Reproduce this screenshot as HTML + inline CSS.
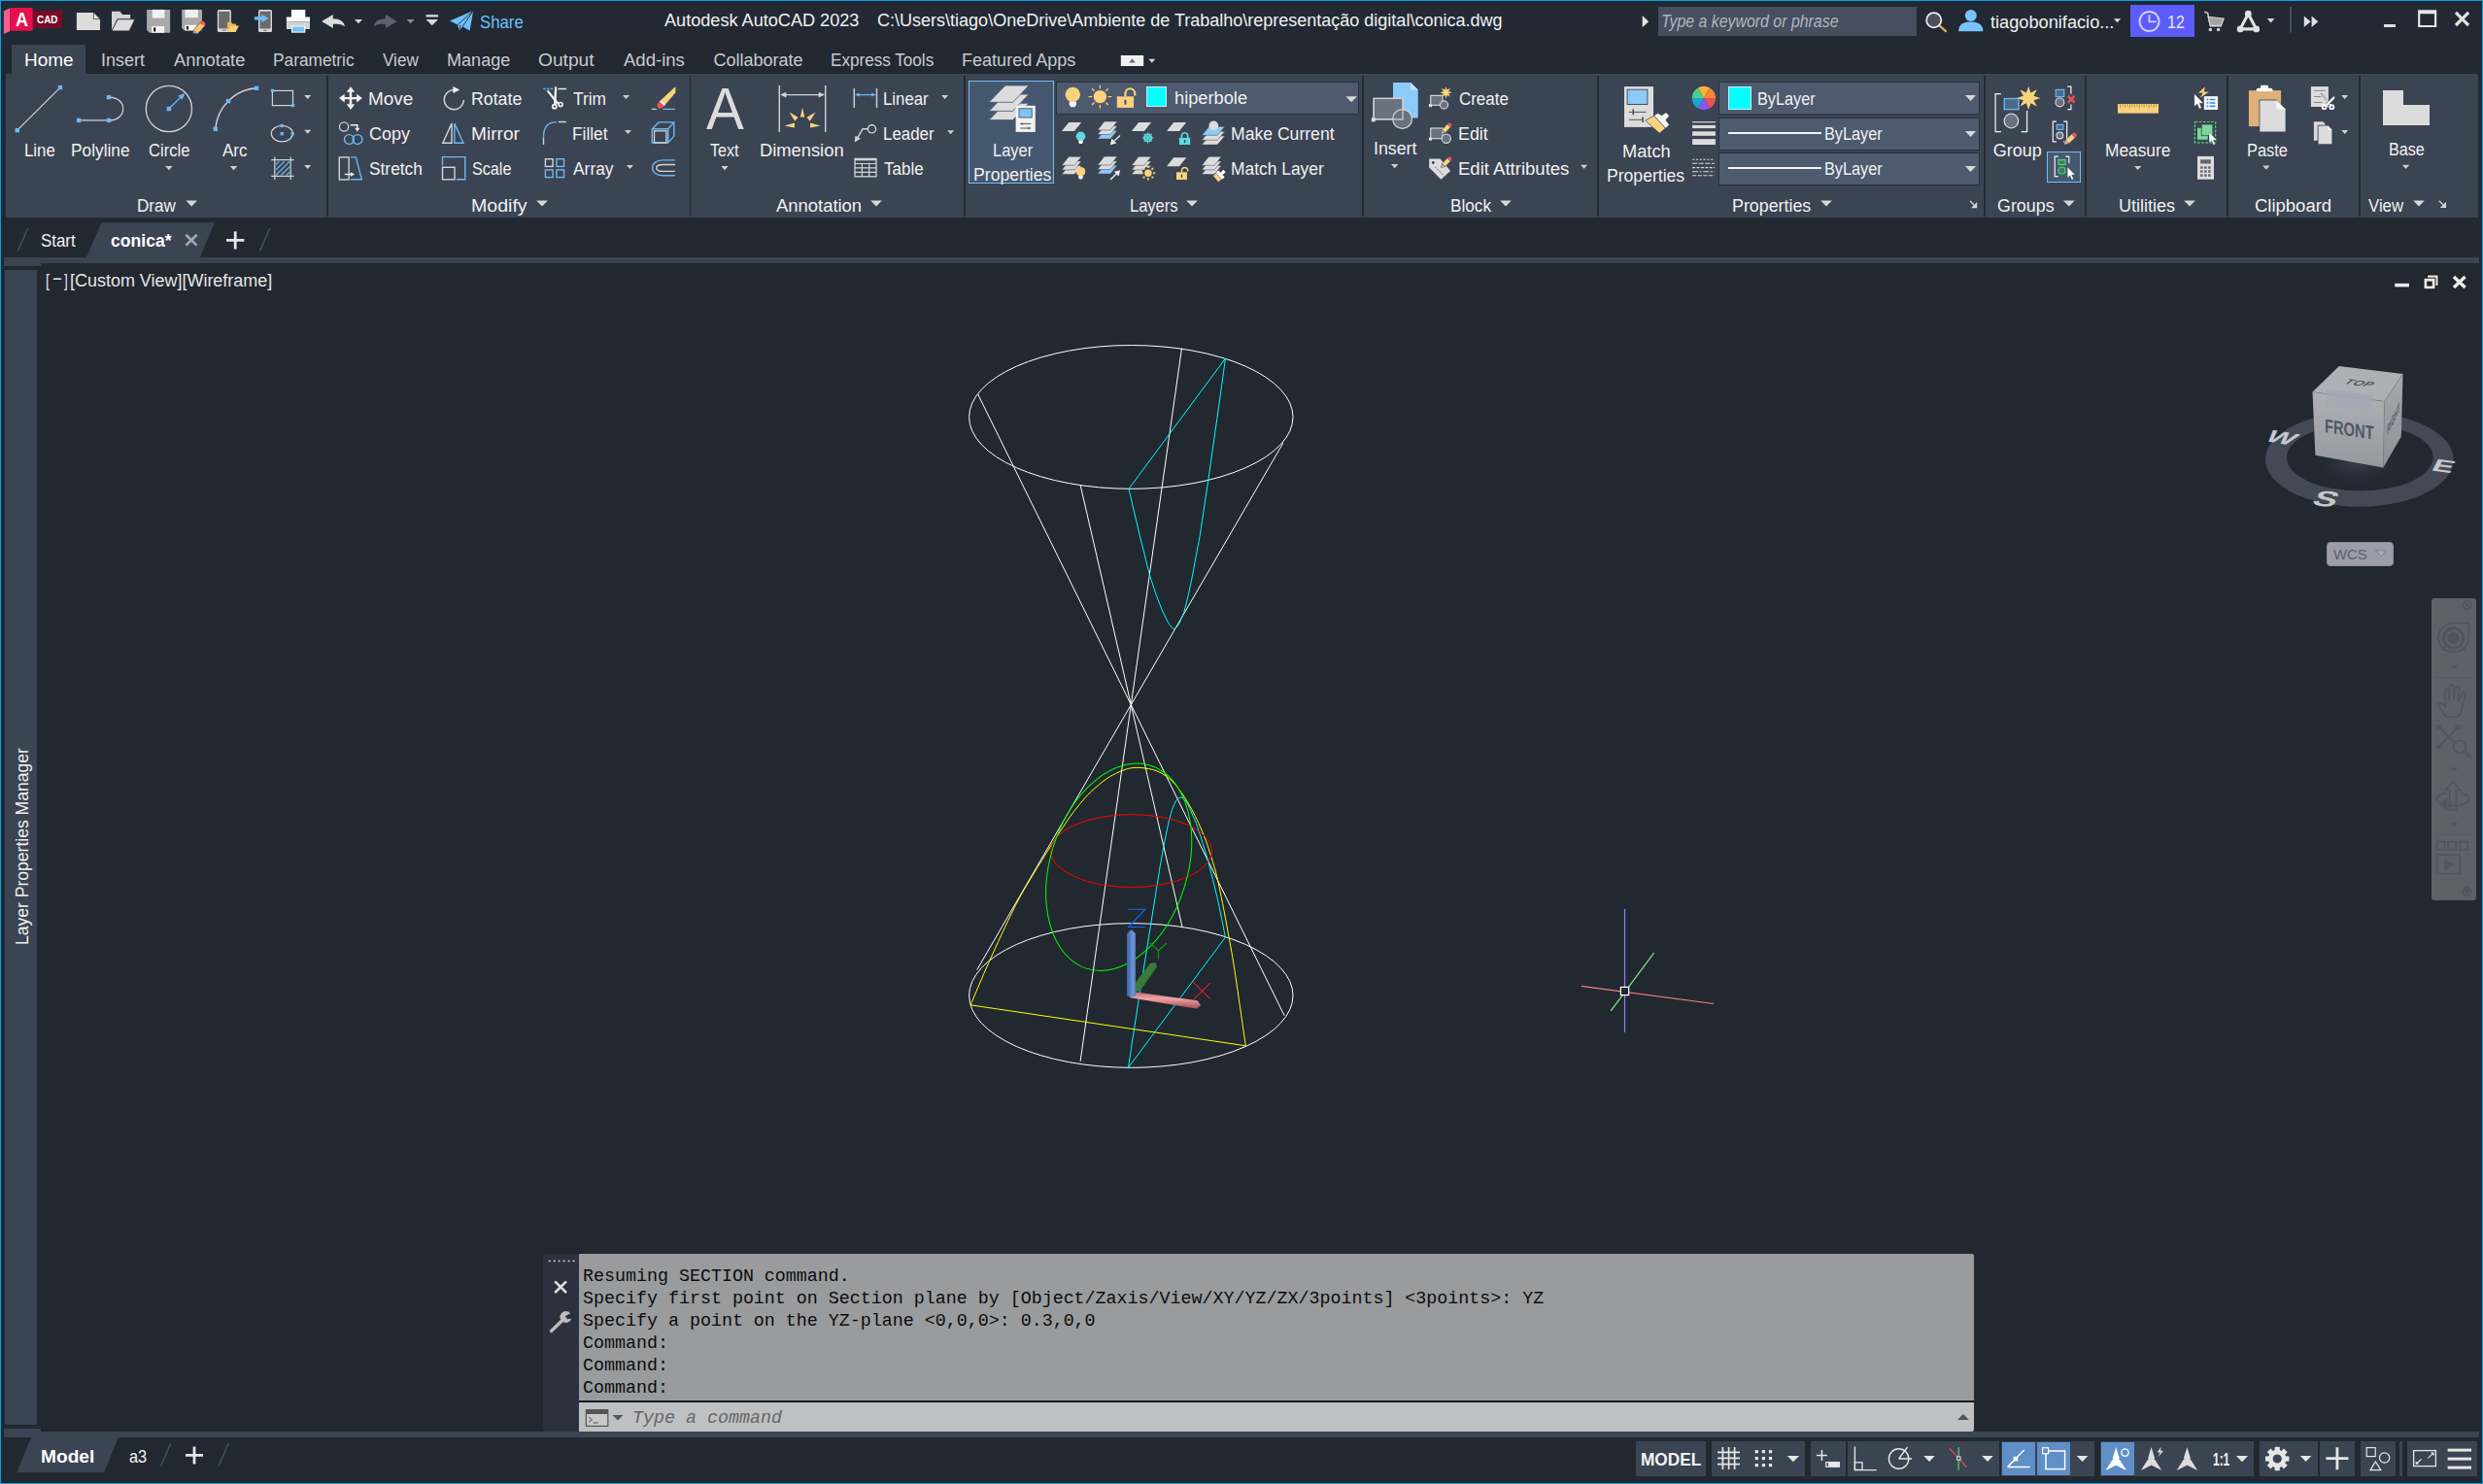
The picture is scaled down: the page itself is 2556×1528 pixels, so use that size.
<!DOCTYPE html>
<html lang="en"><head><meta charset="utf-8"><title>Autodesk AutoCAD 2023 - conica.dwg</title>
<style>
html,body{margin:0;padding:0}
body{width:2556px;height:1528px;position:relative;overflow:hidden;background:#212830;font-family:"Liberation Sans",sans-serif;}
body div,body span.t,svg.ov{position:absolute}
section,nav,header,footer,main,aside{position:absolute;left:0;top:0;width:0;height:0}
span.t{white-space:pre;line-height:1;transform-origin:0 50%;display:block}
span.m{font-family:"Liberation Mono",monospace}
svg.ov{left:0;top:0;pointer-events:none;overflow:visible}
</style></head><body>
<header id="titlebar">
<div style="left:0px;top:0px;width:2556px;height:43px;background:#222933;"></div>
<div style="left:1707.1px;top:7.2px;width:266px;height:29.5px;background:#464e60;"></div>
<div style="left:2192.8px;top:5.1px;width:66.3px;height:32.9px;background:#5c5cfa;"></div>
<svg id="title-icons" class="ov" width="2556" height="1528" viewBox="0 0 2556 1528"><path d="M3.9 11.3L10.1 8.4V32.2L3.9 35z" fill="#f0608c"/>
<path d="M10.1 9.1a1 1 0 0 1 1-1H32.8a1 1 0 0 1 1 1V30.8a1 1 0 0 1-1 1H10.1z" fill="#e5104e"/>
<rect x="33.8" y="11.1" width="30.3" height="17.7" fill="#7a0a2c"/>
<path d="M78.9 13H96.4L103 19.6V31H78.9z" fill="#dcdcdc"/><path d="M96.4 13L103 19.6H96.4z" fill="#f2f2f2" stroke="#222933" stroke-width="0.7"/>
<path d="M115 31.9V11.8H123.5L126 15H134.2V19.5H120.5z" fill="#d4d4d4"/>
<path d="M115 31.9L121 19.8H139L133 31.9z" fill="#dcdcdc" stroke="#222933" stroke-width="0.8"/>
<path d="M151.1 9.9H175.1V33.8H154L151.1 31z" fill="#a9a9a9"/>
<rect x="156.7" y="9.9" width="12.8" height="8.7" fill="#f0f0f0"/>
<rect x="156.2" y="27" width="12.9" height="6.8" fill="#f4f4f4"/><rect x="158.2" y="28.3" width="2" height="4.2" fill="#111"/>
<path d="M187.2 9.9H208V31.5H190L187.2 29z" fill="#a9a9a9"/>
<rect x="190.5" y="9.9" width="13.4" height="8.3" fill="#efefef"/>
<rect x="190.5" y="25.8" width="12" height="5.6" fill="#f4f4f4"/><rect x="192" y="27" width="2" height="3.4" fill="#111"/>
<path d="M199.5 30.5L206.8 22.3L211.2 26.2L203.9 34.4L198.7 34.2z" fill="#f6c769" stroke="#222933" stroke-width="0.6"/><path d="M205.3 23.9a2.8 2.8 0 0 1 4.4 -1.6a2.8 2.8 0 0 1 1.3 4.1z" fill="#f05a5a"/><path d="M199.5 30.5L203.9 34.4L198.7 34.2z" fill="#9a9a9a"/>
<rect x="223.8" y="10.1" width="14.1" height="22.8" rx="1.6" fill="#d8d8d8"/><rect x="225.2" y="11.8" width="11.3" height="17.6" fill="#6a6a6a"/><rect x="229.2" y="30.6" width="3.4" height="1" fill="#6a6a6a"/>
<path d="M234 32.9V22.8H238L239.4 24.4H243V27H237.2z" fill="#eab64f"/><path d="M234 32.9L237.4 26.6H246L242.6 32.9z" fill="#f9d27a"/>
<rect x="266" y="10" width="14" height="23.1" rx="1.6" fill="#d8d8d8"/><rect x="267.4" y="11.7" width="11.2" height="17.8" fill="#6a6a6a"/><rect x="271.3" y="30.8" width="3.4" height="1" fill="#6a6a6a"/>
<path d="M261.9 17.3H269.5V14.7L276.5 18.9L269.5 23.1V20.5H261.9z" fill="#6cc0f8"/>
<rect x="299.9" y="10" width="14.4" height="8" fill="#ffffff"/><rect x="294.9" y="17.5" width="24.1" height="5" fill="#fafafa"/><rect x="294.9" y="22.5" width="24.1" height="7.5" fill="#d2d2d2"/><rect x="299.9" y="26.4" width="14.4" height="7.3" fill="#f4f4f4"/><rect x="301.1" y="27.6" width="12" height="5" fill="#74bff5"/>
<path d="M331.1 22L342.8 15V19.3C350 19.3 354.6 22.5 354.9 27.5C352 24.8 348.5 24.6 342.8 24.7V29z" fill="#dcdcdc"/>
<path d="M364.9 19.9h8.2l-4.1 4.4z" fill="#d6d6d6"/>
<path d="M408.6 22L396.9 15V19.3C389.7 19.3 385.1 22.5 384.8 27.5C387.7 24.8 391.2 24.6 396.9 24.7V29z" fill="#5c616c"/>
<path d="M418.5 19.9h8.2l-4.1 4.4z" fill="#8c8c8c"/>
<rect x="438.5" y="15.2" width="12.5" height="2.3" fill="#dcdcdc"/><path d="M438.5 20H451L444.75 26.2z" fill="#dcdcdc"/>
<path d="M462.9 21.6L487.2 11L483.6 31.8L476.3 27.2L472.6 31.4L471.2 25.4z" fill="#6cc0f8"/><path d="M471.2 25.4L487.2 11L476.3 27.2M472.6 31.4L474 25.8" stroke="#222933" stroke-width="0.9" fill="none"/>
<path d="M1690.7 16.1L1697.1 22.2L1690.7 28.3z" fill="#e4e4e4"/>
<path d="M1996.4 26.4L2003 32.2" stroke="#eaa866" stroke-width="2.2" stroke-linecap="round"/><circle cx="1990.7" cy="20.7" r="7.6" fill="#4a5160" stroke="#f0f0f0" stroke-width="1.7"/>
<circle cx="2028.8" cy="15.9" r="6" fill="#78c4fa"/><path d="M2016.2 32.2C2016.2 25 2021 22.6 2028.8 22.6S2041.3 25 2041.3 32.2z" fill="#78c4fa"/>
<path d="M2175.9 19.2h7.2l-3.6 4z" fill="#e0e0e0"/>
<circle cx="2212.5" cy="22" r="10" fill="none" stroke="#cfcfff" stroke-width="1.9"/><path d="M2212.5 15.3V22.4H2219.7" fill="none" stroke="#cfcfff" stroke-width="1.9"/>
<path d="M2269.1 12.3L2272.6 13.4L2275.6 26.8H2287" fill="none" stroke="#d4d4d4" stroke-width="1.5"/><path d="M2273 17.2L2289.2 19.1L2286.4 26.4H2275.2z" fill="#a2a2a2" stroke="#d8d8d8" stroke-width="1.1"/><circle cx="2275.4" cy="30.5" r="1.7" fill="#d8d8d8"/><circle cx="2283.6" cy="30.5" r="1.7" fill="#d8d8d8"/>
<path d="M2314.3 14.2L2306.1 29.9H2322.7z" fill="none" stroke="#e0e0e0" stroke-width="3.1" stroke-linejoin="round"/><circle cx="2314.3" cy="14.2" r="3.4" fill="#e0e0e0"/><circle cx="2306.1" cy="29.9" r="3.4" fill="#e0e0e0"/><circle cx="2322.7" cy="29.9" r="3.4" fill="#e0e0e0"/>
<path d="M2333.8 18.9h7.6l-3.8 4.5z" fill="#d6d6d6"/>
<rect x="2357" y="7.1" width="1.7" height="26.4" fill="#4a5266"/>
<path d="M2371.8 16.6L2378.6 22.3L2371.8 28.1zM2379.6 16.6L2386.3 22.3L2379.6 28.1z" fill="#e0e0e0"/>
<rect x="2454" y="25" width="11.9" height="3" fill="#e2e2e2"/>
<path fill-rule="evenodd" fill="#e6e6e6" d="M2489.1 10.2H2508.2V28.1H2489.1zM2491.3 14.2V25.9H2506V14.2z"/>
<path d="M2528 12.9L2541.1 26M2541.1 12.9L2528 26" stroke="#e2e2e2" stroke-width="3.2"/></svg>
<span class="t" style="left:15.5px;top:11px;font-size:19.6px;color:#fff;font-weight:700;transform:scaleX(0.9187);">A</span>
<span class="t" style="left:38.2px;top:15px;font-size:11.2px;color:#fff;font-weight:700;transform:scaleX(0.8869);">CAD</span>
<span class="t" style="left:493.6px;top:14px;font-size:18.5px;color:#6cc0f8;transform:scaleX(0.9054);">Share</span>
<span class="t" style="left:683.6px;top:12px;font-size:18px;color:#f1f1f1;transform:scaleX(1.0064);">Autodesk AutoCAD 2023</span>
<span class="t" style="left:903.1px;top:12px;font-size:18px;color:#f1f1f1;">C:\Users\tiago\OneDrive\Ambiente de Trabalho\representação digital\conica.dwg</span>
<span class="t" style="left:1709.9px;top:13px;font-size:18px;color:#b2b6be;font-style:italic;transform:scaleX(0.8826);">Type a keyword or phrase</span>
<span class="t" style="left:2048.8px;top:14px;font-size:18px;color:#f1f1f1;transform:scaleX(1.0106);">tiagobonifacio...</span>
<span class="t" style="left:2230.8px;top:14px;font-size:18px;color:#e6e6ff;transform:scaleX(0.8902);">12</span>
</header>
<nav id="menutabs">
<div style="left:12px;top:46px;width:76px;height:30.5px;background:#3b4453;"></div>
<span class="t" style="left:25.0px;top:53px;font-size:18px;color:#ffffff;transform:scaleX(1.0538);">Home</span>
<span class="t" style="left:104.0px;top:53px;font-size:18px;color:#c8cbd0;transform:scaleX(0.9969);">Insert</span>
<span class="t" style="left:179.3px;top:53px;font-size:18px;color:#c8cbd0;transform:scaleX(1.0179);">Annotate</span>
<span class="t" style="left:281.2px;top:53px;font-size:18px;color:#c8cbd0;transform:scaleX(0.9602);">Parametric</span>
<span class="t" style="left:394.2px;top:53px;font-size:18px;color:#c8cbd0;transform:scaleX(0.9492);">View</span>
<span class="t" style="left:460.3px;top:53px;font-size:18px;color:#c8cbd0;transform:scaleX(1.0034);">Manage</span>
<span class="t" style="left:554.4px;top:53px;font-size:18px;color:#c8cbd0;transform:scaleX(1.0648);">Output</span>
<span class="t" style="left:642.3px;top:53px;font-size:18px;color:#c8cbd0;transform:scaleX(1.0306);">Add-ins</span>
<span class="t" style="left:734.4px;top:53px;font-size:18px;color:#c8cbd0;">Collaborate</span>
<span class="t" style="left:855.2px;top:53px;font-size:18px;color:#c8cbd0;transform:scaleX(0.9507);">Express Tools</span>
<span class="t" style="left:990.1px;top:53px;font-size:18px;color:#c8cbd0;transform:scaleX(1.0022);">Featured Apps</span>
<svg id="menu-icons" class="ov" width="2556" height="1528" viewBox="0 0 2556 1528"><rect x="1153.8" y="57" width="23.4" height="11" fill="#f0f0f0"/><path d="M1162.2 64.6H1168.8L1165.5 60.6z" fill="#666"/>
<path d="M1182.3 60.8h7l-3.5 4z" fill="#d6d6d6"/></svg>
</nav>
<section id="ribbon">
<div style="left:6px;top:76px;width:2545.3px;height:148px;background:#3b4453;"></div>
<div style="left:336.09999999999997px;top:78.4px;width:1.7px;height:144.3px;background:#232a35;"></div>
<div style="left:709.8000000000001px;top:78.4px;width:1.7px;height:144.3px;background:#232a35;"></div>
<div style="left:992.2px;top:78.4px;width:1.7px;height:144.3px;background:#232a35;"></div>
<div style="left:1402.2px;top:78.4px;width:1.7px;height:144.3px;background:#232a35;"></div>
<div style="left:1644.0px;top:78.4px;width:1.7px;height:144.3px;background:#232a35;"></div>
<div style="left:2041.9px;top:78.4px;width:1.7px;height:144.3px;background:#232a35;"></div>
<div style="left:2146.2px;top:78.4px;width:1.7px;height:144.3px;background:#232a35;"></div>
<div style="left:2292.1px;top:78.4px;width:1.7px;height:144.3px;background:#232a35;"></div>
<div style="left:2428.1px;top:78.4px;width:1.7px;height:144.3px;background:#232a35;"></div>
<div style="left:996.7px;top:82.8px;width:88.3px;height:106.6px;background:#46586f;box-sizing:border-box;border:1.8px solid #74bcf4"></div>
<div style="left:1087.3px;top:84.4px;width:311.8px;height:33.2px;background:#4e5a6e;box-sizing:border-box;border:1.8px solid #2a303c"></div>
<div style="left:1769px;top:84.2px;width:269.4px;height:33.8px;background:#4e5a6e;box-sizing:border-box;border:1.9px solid #2a303c"></div>
<div style="left:1769px;top:121.2px;width:269.4px;height:33.8px;background:#4e5a6e;box-sizing:border-box;border:1.9px solid #2a303c"></div>
<div style="left:1769px;top:157.1px;width:269.4px;height:33.8px;background:#4e5a6e;box-sizing:border-box;border:1.9px solid #2a303c"></div>
<div style="left:2106.5px;top:155.6px;width:35.3px;height:32.4px;background:#46586f;box-sizing:border-box;border:1.8px solid #74bcf4"></div>
<div style="left:1180px;top:89px;width:21.2px;height:21px;background:#00ffff;box-sizing:border-box;border:1px solid #dfe3e8"></div>
<div style="left:1779px;top:89.1px;width:23.8px;height:23.9px;background:#00ffff;box-sizing:border-box;border:1px solid #dfe3e8"></div>
<div style="left:1779px;top:135.9px;width:96px;height:2px;background:#f4f4f4;"></div>
<div style="left:1779px;top:172px;width:96px;height:2px;background:#f4f4f4;"></div>
<svg id="ribbon-icons" class="ov" width="2556" height="1528" viewBox="0 0 2556 1528"><path d="M191.4 206.5h11.6l-5.8 6z" fill="#d8d8d8"/>
<path d="M552.2 206.5h11.6l-5.8 6z" fill="#d8d8d8"/>
<path d="M896.2 206.5h11.6l-5.8 6z" fill="#d8d8d8"/>
<path d="M1221.2 206.5h11.6l-5.8 6z" fill="#d8d8d8"/>
<path d="M1544.2 206.5h11.6l-5.8 6z" fill="#d8d8d8"/>
<path d="M1874.2 206.5h11.6l-5.8 6z" fill="#d8d8d8"/>
<path d="M2124.0 206.5h11.6l-5.8 6z" fill="#d8d8d8"/>
<path d="M2248.2 206.5h11.6l-5.8 6z" fill="#d8d8d8"/>
<path d="M2484.2 206.5h11.6l-5.8 6z" fill="#d8d8d8"/>
<path d="M170.2 171.1h7.4l-3.7 4.2z" fill="#d0d0d0"/>
<path d="M236.9 171.1h7.4l-3.7 4.2z" fill="#d0d0d0"/>
<path d="M742.3 171.1h7.4l-3.7 4.2z" fill="#d0d0d0"/>
<path d="M2197.0 170.9h7.4l-3.7 4.2z" fill="#d0d0d0"/>
<path d="M2329.1 170.6h7.4l-3.7 4.2z" fill="#d0d0d0"/>
<path d="M2472.9 169.8h7.4l-3.7 4.2z" fill="#d0d0d0"/>
<path d="M1432.0 169.0h7.4l-3.7 4.2z" fill="#d0d0d0"/>
<path d="M313.2 98.0h7l-3.5 4z" fill="#d0d0d0"/>
<path d="M313.2 133.8h7l-3.5 4z" fill="#d0d0d0"/>
<path d="M313.2 169.9h7l-3.5 4z" fill="#d0d0d0"/>
<path d="M641.0 98.0h7l-3.5 4z" fill="#d0d0d0"/>
<path d="M643.0 134.0h7l-3.5 4z" fill="#d0d0d0"/>
<path d="M645.0 170.0h7l-3.5 4z" fill="#d0d0d0"/>
<path d="M969.1 97.9h7l-3.5 4z" fill="#d0d0d0"/>
<path d="M975.1 134.2h7l-3.5 4z" fill="#d0d0d0"/>
<path d="M1627.1 169.8h7l-3.5 4z" fill="#d0d0d0"/>
<path d="M1385.3 99.2h11.6l-5.8 6z" fill="#d8d8d8"/>
<path d="M2023.0 98.0h11l-5.5 6z" fill="#d8d8d8"/>
<path d="M2023.0 135.0h11l-5.5 6z" fill="#d8d8d8"/>
<path d="M2023.0 171.0h11l-5.5 6z" fill="#d8d8d8"/>
<path d="M2410.2 98.0h7l-3.5 4z" fill="#d0d0d0"/>
<path d="M2410.2 133.9h7l-3.5 4z" fill="#d0d0d0"/>
<path d="M 17.8 134.2 L 62.0 90.1" fill="none" stroke="#d2d4d8" stroke-width="1.2"/>
<rect x="15.6" y="132.0" width="4.4" height="4.4" fill="#6cb8f0"/>
<rect x="59.8" y="87.9" width="4.4" height="4.4" fill="#6cb8f0"/>
<path d="M 81.1 123.9 L 112.0 123.9 C 131.7 123.9 131.7 100.1 112.0 100.1" fill="none" stroke="#d2d4d8" stroke-width="1.2"/>
<rect x="78.9" y="121.7" width="4.4" height="4.4" fill="#6cb8f0"/>
<rect x="109.8" y="121.7" width="4.4" height="4.4" fill="#6cb8f0"/>
<rect x="109.8" y="97.9" width="4.4" height="4.4" fill="#6cb8f0"/>
<circle cx="173.9" cy="112.0" r="23.6" fill="none" stroke="#d2d4d8" stroke-width="1.3"/>
<path d="M 173.9 112.0 L 186.5 99.6" fill="none" stroke="#6cb8f0" stroke-width="1.3"/>
<path d="M 190.3 95.9 L 183.5 98.6 L 187.6 102.8 Z" fill="#6cb8f0"/>
<rect x="171.7" y="109.8" width="4.4" height="4.4" fill="#6cb8f0"/>
<path d="M221.8 132.8A45.5 45.5 0 0 1 264.0 90.8" fill="none" stroke="#d2d4d8" stroke-width="1.4"/>
<rect x="219.6" y="130.6" width="4.4" height="4.4" fill="#6cb8f0"/>
<rect x="232.8" y="101.9" width="4.4" height="4.4" fill="#6cb8f0"/>
<rect x="261.8" y="88.6" width="4.4" height="4.4" fill="#6cb8f0"/>
<rect x="280.4" y="93.4" width="21.1" height="15.2" fill="none" stroke="#d2d4d8" stroke-width="1.2"/>
<rect x="278.8" y="91.7" width="3.3" height="3.3" fill="#6cb8f0"/>
<rect x="299.9" y="106.9" width="3.3" height="3.3" fill="#6cb8f0"/>
<ellipse cx="290.3" cy="137.6" rx="11.0" ry="8.2" fill="none" stroke="#d2d4d8" stroke-width="1.2"/>
<rect x="288.6" y="136.0" width="3.3" height="3.3" fill="#6cb8f0"/>
<rect x="288.6" y="127.8" width="3.3" height="3.3" fill="#6cb8f0"/>
<rect x="299.6" y="136.0" width="3.3" height="3.3" fill="#6cb8f0"/>
<path d="M 284.1 169.2 L 287.3 166.1 M 284.1 174.7 L 292.8 166.1 M 284.1 180.2 L 298.2 166.1 M 298.2 171.6 L 289.5 180.3 M 298.2 177.1 L 294.9 180.3" fill="none" stroke="#6cb8f0" stroke-width="1.3"/>
<path d="M 279.3 164.7 H 302.6 M 279.3 181.4 H 302.6 M 282.8 161.6 V 184.9 M 299.2 161.6 V 184.9" fill="none" stroke="#d2d4d8" stroke-width="1.2"/>
<path d="M 361.0 89.2 L 365.2 94.8 L 362.2 94.8 L 362.2 99.9 L 367.2 99.9 L 367.2 96.8 L 372.9 101.1 L 367.2 105.4 L 367.2 102.3 L 362.2 102.3 L 362.2 107.2 L 365.2 107.2 L 361.0 112.9 L 356.7 107.2 L 359.7 107.2 L 359.7 102.3 L 354.7 102.3 L 354.7 105.4 L 349.0 101.1 L 354.7 96.8 L 354.7 99.9 L 359.7 99.9 L 359.7 94.8 L 356.7 94.8 Z" fill="#f2f2f2"/>
<circle cx="354.1" cy="130.5" r="4.6" fill="none" stroke="#d2d4d8" stroke-width="1.3"/>
<path d="M 360.7 128.7 L 367.8 128.7 L 367.8 132.8" fill="none" stroke="#f2f2f2" stroke-width="1.4"/>
<path d="M 365.4 131.7 L 370.3 131.7 L 367.8 135.7 Z" fill="#f2f2f2"/>
<circle cx="359.4" cy="143.5" r="4.9" fill="none" stroke="#6cb8f0" stroke-width="1.4"/>
<circle cx="368.0" cy="143.5" r="4.9" fill="none" stroke="#6cb8f0" stroke-width="1.4"/>
<path d="M 361.0 161.9 L 366.3 161.9 L 372.4 184.8 L 361.0 184.8" fill="none" stroke="#6cb8f0" stroke-width="1.4"/>
<rect x="349.3" y="161.9" width="9.8" height="23.0" fill="#3b4453" stroke="#d2d4d8" stroke-width="1.4"/>
<path d="M 354.8 179.5 L 362.2 179.5" fill="none" stroke="#f2f2f2" stroke-width="1.4"/>
<path d="M 361.0 177.2 L 365.1 179.5 L 361.0 181.8 Z" fill="#f2f2f2"/>
<path d="M466.9 92.5A10.1 10.1 0 1 0 477.4 103.0" fill="none" stroke="#d2d4d8" stroke-width="1.5"/>
<path d="M 466.3 88.9 L 473.3 92.5 L 466.3 95.9 Z" fill="#f2f2f2"/>
<path d="M 465.0 127.1 L 465.0 147.3 L 455.8 147.3 Z" fill="none" stroke="#d2d4d8" stroke-width="1.4"/>
<path d="M 467.8 127.1 L 467.8 147.3 L 477.0 147.3 Z" fill="none" stroke="#6cb8f0" stroke-width="1.4"/>
<path d="M 455.5 170.6 L 455.5 161.6 L 478.8 161.6 L 478.8 184.8 L 469.9 184.8" fill="none" stroke="#6cb8f0" stroke-width="1.4"/>
<rect x="455.5" y="172.3" width="12.5" height="12.5" fill="none" stroke="#d2d4d8" stroke-width="1.4"/>
<path d="M 559.2 91.5 L 569.9 91.5" fill="none" stroke="#6cb8f0" stroke-width="1.3" stroke-dasharray="2.4 1.4"/>
<path d="M 574.5 91.5 L 582.9 91.5" fill="none" stroke="#f2f2f2" stroke-width="1.4"/>
<path d="M 562.4 93.5 L 564.8 93.2 L 575.5 106.3 L 573.4 107.5 Z" fill="#f2f2f2"/>
<path d="M 571.1 89.2 L 573.2 89.5 L 572.5 107.5 L 570.0 107.2 Z" fill="#f2f2f2"/>
<circle cx="570.8" cy="109.7" r="2.0" fill="none" stroke="#f2f2f2" stroke-width="1.7"/>
<circle cx="577.1" cy="107.5" r="2.0" fill="none" stroke="#f2f2f2" stroke-width="1.7"/>
<path d="M 559.5 140.9 Q 559.5 125.6 573.2 125.6" fill="none" stroke="#6cb8f0" stroke-width="1.4"/>
<path d="M 559.5 141.5 L 559.5 148.9 M 574.8 125.5 L 582.9 125.5" fill="none" stroke="#d2d4d8" stroke-width="1.4"/>
<rect x="561.4" y="163.7" width="7.7" height="7.7" fill="none" stroke="#d2d4d8" stroke-width="1.4"/>
<rect x="572.9" y="163.7" width="7.7" height="7.7" fill="none" stroke="#6cb8f0" stroke-width="1.4"/>
<rect x="561.4" y="174.9" width="7.7" height="7.7" fill="none" stroke="#6cb8f0" stroke-width="1.4"/>
<rect x="572.9" y="174.9" width="7.7" height="7.7" fill="none" stroke="#6cb8f0" stroke-width="1.4"/>
<path d="M 695.4 88.9 L 695.4 95.3 L 685.1 107.5 L 680.4 103.0 Z" fill="#fbd27c"/>
<path d="M 680.4 103.0 L 685.1 107.5 L 683.6 109.2 L 678.8 104.6 Z" fill="#f4f4f4"/>
<path d="M 678.8 104.6 L 683.6 109.2 Q 680.8 112.4 677.8 111.4 Q 674.7 109.1 678.8 104.6 Z" fill="#f0505a"/>
<path d="M 670.9 112.4 L 675.8 112.4" fill="none" stroke="#d2d4d8" stroke-width="1.3"/>
<path d="M 682.4 112.4 L 694.9 112.4" fill="none" stroke="#6cb8f0" stroke-width="1.3"/>
<path d="M 671.3 132.8 L 678.1 125.9 L 693.8 125.9 L 693.8 140.1 L 687.7 147.0 L 671.3 147.0 Z M 671.3 132.8 L 687.7 132.8 L 687.7 147.0 M 687.7 132.8 L 693.8 125.9" fill="none" stroke="#6cb8f0" stroke-width="1.4"/>
<rect x="673.5" y="134.8" width="12.4" height="12.2" fill="none" stroke="#d2d4d8" stroke-width="1.3"/>
<path d="M 694.9 164.9 L 682.4 164.9 C 667.8 164.9 667.8 180.7 682.4 180.7 L 694.9 180.7" fill="none" stroke="#6cb8f0" stroke-width="1.4"/>
<path d="M 694.9 169.5 L 682.4 169.5 C 673.5 169.5 673.5 176.4 682.4 176.4 L 694.9 176.4" fill="none" stroke="#d2d4d8" stroke-width="1.4"/>
<path d="M 802.3 88.0 V 135.9 M 849.7 88.0 V 135.9 M 807.7 97.6 H 844.5" fill="none" stroke="#d2d4d8" stroke-width="1.4"/>
<path d="M 803.1 97.6 L 809.3 94.7 L 809.3 100.5 Z M 849.0 97.6 L 842.7 94.7 L 842.7 100.5 Z" fill="#d2d4d8"/>
<path d="M 826.0 110.6 L 828.2 120.4 L 823.9 120.4 Z M 812.6 115.5 L 821.6 120.7 L 818.2 124.8 Z M 839.5 115.5 L 830.5 120.7 L 833.8 124.8 Z M 807.5 129.6 L 817.9 126.5 L 817.9 131.4 Z M 844.5 129.6 L 834.1 126.5 L 834.1 131.4 Z" fill="#fbd27c"/>
<path d="M 879.3 91.0 V 111.1 M 902.5 91.0 V 111.1" fill="none" stroke="#d2d4d8" stroke-width="1.4"/>
<path d="M 883.1 97.6 H 899.0" fill="none" stroke="#6cb8f0" stroke-width="1.3"/>
<path d="M 880.0 97.6 L 884.5 95.6 L 884.5 99.6 Z M 901.8 97.6 L 897.3 95.6 L 897.3 99.6 Z" fill="#6cb8f0"/>
<circle cx="897.5" cy="132.8" r="4.1" fill="none" stroke="#d2d4d8" stroke-width="1.4"/>
<path d="M 893.4 132.8 L 888.0 132.8 L 882.5 142.4" fill="none" stroke="#d2d4d8" stroke-width="1.4"/>
<path d="M 879.7 146.4 L 880.4 139.7 L 885.9 142.7 Z" fill="#d2d4d8"/>
<rect x="880.0" y="163.4" width="22.0" height="18.4" fill="none" stroke="#d2d4d8" stroke-width="1.3"/>
<path d="M 880.0 168.5 H 902.1 M 880.0 172.9 H 902.1 M 880.0 177.3 H 902.1 M 887.4 168.5 V 181.8 M 894.7 168.5 V 181.8" fill="none" stroke="#d2d4d8" stroke-width="1.2"/>
<path d="M 880.0 164.5 H 902.1" fill="none" stroke="#d2d4d8" stroke-width="1.6"/>
<path d="M 1018.1 123.6 L 1034.9 106.3 L 1059.1 106.3 L 1042.6 123.6 Z" fill="#dcdcdc" stroke="#46576e" stroke-width="0.8"/>
<path d="M 1018.1 114.4 L 1034.9 97.1 L 1059.1 97.1 L 1042.6 114.4 Z" fill="#dcdcdc" stroke="#46576e" stroke-width="0.8"/>
<path d="M 1018.1 105.3 L 1034.9 88.0 L 1059.1 88.0 L 1042.6 105.3 Z" fill="#dcdcdc" stroke="#46576e" stroke-width="0.8"/>
<rect x="1045.6" y="108.8" width="20.2" height="27.1" fill="#f2f2f2"/>
<rect x="1049.0" y="111.8" width="13.2" height="9.2" fill="#7cc4fa" stroke="#3b4453" stroke-width="0.8"/>
<path d="M 1050.2 127.4 H 1061.3 M 1050.2 132.0 H 1061.3" fill="none" stroke="#555" stroke-width="1"/>
<path d="M 1052.1 126.2 V 128.7 M 1059.1 130.8 V 133.3" fill="none" stroke="#555" stroke-width="1.2"/>
<circle cx="1104.3" cy="97.4" r="7.7" fill="#fbd27c"/>
<path d="M1100.7 104.5h7.3v3.2l-1.6 2.5h-4.1l-1.6 -2.5z" fill="#f4f4f4"/>
<circle cx="1132.4" cy="99.6" r="6.7" fill="#fbd27c"/>
<path d="M1140.7 99.6L1144.3 99.6" stroke="#fbd27c" stroke-width="1.2"/>
<path d="M1138.3 105.5L1140.8 108.0" stroke="#fbd27c" stroke-width="1.2"/>
<path d="M1132.4 107.9L1132.4 111.4" stroke="#fbd27c" stroke-width="1.2"/>
<path d="M1126.6 105.5L1124.0 108.0" stroke="#fbd27c" stroke-width="1.2"/>
<path d="M1124.1 99.6L1120.6 99.6" stroke="#fbd27c" stroke-width="1.2"/>
<path d="M1126.6 93.7L1124.0 91.2" stroke="#fbd27c" stroke-width="1.2"/>
<path d="M1132.4 91.3L1132.4 87.7" stroke="#fbd27c" stroke-width="1.2"/>
<path d="M1138.3 93.7L1140.8 91.2" stroke="#fbd27c" stroke-width="1.2"/>
<rect x="1149.8" y="99.3" width="17.3" height="11.6" fill="#fbd27c"/>
<path d="M1158.5 99.3v-3.2a4.8 4.8 0 0 1 9.7 0v2.3" fill="none" stroke="#fbd27c" stroke-width="2.2"/>
<rect x="1157.4" y="102.8" width="2.1" height="4.9" fill="#4a5568"/>
<path d="M1093.0 135.0l7.2 -9h13l-7.2 9z" fill="#dcdcdc"/>
<circle cx="1112.5" cy="140.3" r="4.8" fill="#5fd8e0"/>
<path d="M1110.2 144.5h4.6v2.0l-1.0 1.5h-2.6l-1.0 -1.5z" fill="#f4f4f4"/>
<path d="M1129.9 143.1l7 -8.8h13.2l-7 8.8z" fill="#8ccaf8" stroke="#3b4453" stroke-width="0.5"/>
<path d="M1129.9 138.5l7 -8.8h13.2l-7 8.8z" fill="#dcdcdc" stroke="#3b4453" stroke-width="0.5"/>
<path d="M1129.9 133.9l7 -8.8h13.2l-7 8.8z" fill="#dcdcdc" stroke="#3b4453" stroke-width="0.5"/>
<path d="M1153 139.5L1146.5 145.6" stroke="#f2f2f2" stroke-width="1.3"/><path d="M1142.8 149.2L1144.4 142.8L1149.2 147.6z" fill="#f2f2f2"/>
<path d="M1164.9 135.0l7.2 -9h13l-7.2 9z" fill="#dcdcdc"/>
<g stroke="#5fd8e0" stroke-width="1.1" fill="none" transform="translate(1181.7 141.9)"><path d="M0 -5.6V5.6M-1.8 -4.2L0 -2.6L1.8 -4.2M-1.8 4.2L0 2.6L1.8 4.2" transform="rotate(0)"/><path d="M0 -5.6V5.6M-1.8 -4.2L0 -2.6L1.8 -4.2M-1.8 4.2L0 2.6L1.8 4.2" transform="rotate(45)"/><path d="M0 -5.6V5.6M-1.8 -4.2L0 -2.6L1.8 -4.2M-1.8 4.2L0 2.6L1.8 4.2" transform="rotate(90)"/><path d="M0 -5.6V5.6M-1.8 -4.2L0 -2.6L1.8 -4.2M-1.8 4.2L0 2.6L1.8 4.2" transform="rotate(135)"/><circle r="3.4"/></g>
<path d="M1201.0 135.0l7.2 -9h13l-7.2 9z" fill="#dcdcdc"/>
<rect x="1213.9" y="141.9" width="11.3" height="7.1" fill="#5fd8e0"/>
<path d="M1216.4 141.9v-2.5a3.2 3.2 0 0 1 6.3 0v2.5" fill="none" stroke="#5fd8e0" stroke-width="1.7"/>
<rect x="1218.9" y="144.0" width="1.4" height="3.0" fill="#3b4453"/>
<path d="M1237.1 149.1l7.7 -9h16.1l-7.7 9z" fill="#dcdcdc" stroke="#3b4453" stroke-width="0.5"/>
<path d="M1237.1 144.2l7.7 -9h16.1l-7.7 9z" fill="#dcdcdc" stroke="#3b4453" stroke-width="0.5"/>
<path d="M1237.1 139.3l7.7 -9h16.1l-7.7 9z" fill="#8ccaf8" stroke="#3b4453" stroke-width="0.5"/>
<circle cx="1249.3" cy="129.4" r="4.9" fill="#dcdcdc"/>
<path d="M1093.0 179.5l7.2 -9h13l-7.2 9z" fill="#dcdcdc" stroke="#3b4453" stroke-width="0.5"/>
<path d="M1093.0 174.9l7.2 -9h13l-7.2 9z" fill="#dcdcdc" stroke="#3b4453" stroke-width="0.5"/>
<path d="M1093.0 170.3l7.2 -9h13l-7.2 9z" fill="#dcdcdc" stroke="#3b4453" stroke-width="0.5"/>
<circle cx="1112.5" cy="176.7" r="4.8" fill="#fbd27c"/>
<path d="M1110.2 180.9h4.6v2.0l-1.0 1.5h-2.6l-1.0 -1.5z" fill="#f4f4f4"/>
<path d="M1129.9 179.1l7 -8.8h13.2l-7 8.8z" fill="#8ccaf8" stroke="#3b4453" stroke-width="0.5"/>
<path d="M1129.9 174.5l7 -8.8h13.2l-7 8.8z" fill="#dcdcdc" stroke="#3b4453" stroke-width="0.5"/>
<path d="M1129.9 169.9l7 -8.8h13.2l-7 8.8z" fill="#dcdcdc" stroke="#3b4453" stroke-width="0.5"/>
<path d="M1143 185L1149.4 178.8" stroke="#f2f2f2" stroke-width="1.3"/><path d="M1153.2 175.2L1151.6 181.6L1146.8 176.8z" fill="#f2f2f2"/>
<path d="M1164.9 179.5l7.2 -9h13l-7.2 9z" fill="#dcdcdc" stroke="#3b4453" stroke-width="0.5"/>
<path d="M1164.9 174.9l7.2 -9h13l-7.2 9z" fill="#dcdcdc" stroke="#3b4453" stroke-width="0.5"/>
<path d="M1164.9 170.3l7.2 -9h13l-7.2 9z" fill="#dcdcdc" stroke="#3b4453" stroke-width="0.5"/>
<circle cx="1181.9" cy="178.2" r="6.4" fill="#3b4453"/>
<circle cx="1181.9" cy="178.2" r="3.7" fill="#fbd27c"/>
<rect x="1187.1" y="177.2" width="2" height="2" fill="#fbd27c"/>
<rect x="1185.3" y="181.6" width="2" height="2" fill="#fbd27c"/>
<rect x="1180.9" y="183.4" width="2" height="2" fill="#fbd27c"/>
<rect x="1176.5" y="181.6" width="2" height="2" fill="#fbd27c"/>
<rect x="1174.7" y="177.2" width="2" height="2" fill="#fbd27c"/>
<rect x="1176.5" y="172.8" width="2" height="2" fill="#fbd27c"/>
<rect x="1180.9" y="171.0" width="2" height="2" fill="#fbd27c"/>
<rect x="1185.3" y="172.8" width="2" height="2" fill="#fbd27c"/>
<path d="M1201.0 171.3l7.2 -9h13l-7.2 9z" fill="#dcdcdc"/>
<rect x="1211.0" y="177.3" width="10.9" height="7.7" fill="#fbd27c"/>
<path d="M1216.5 177.3v-2.2a3.1 3.1 0 0 1 6.1 0v1.5" fill="none" stroke="#fbd27c" stroke-width="1.4"/>
<rect x="1215.8" y="179.6" width="1.3" height="3.2" fill="#3b4453"/>
<path d="M1237.1 179.5l7.2 -9h13l-7.2 9z" fill="#dcdcdc" stroke="#3b4453" stroke-width="0.5"/>
<path d="M1237.1 174.9l7.2 -9h13l-7.2 9z" fill="#dcdcdc" stroke="#3b4453" stroke-width="0.5"/>
<path d="M1237.1 170.3l7.2 -9h13l-7.2 9z" fill="#dcdcdc" stroke="#3b4453" stroke-width="0.5"/>
<g transform="rotate(-42 1255 180)"><rect x="1249.5" y="176.5" width="4.4" height="8.6" fill="#fbd27c" stroke="#3b4453" stroke-width="0.5"/><rect x="1254" y="176" width="3.6" height="9.6" fill="#fff"/><rect x="1257.6" y="179.2" width="4.2" height="3.2" fill="#fff"/></g>
<path d="M 1434.0 84.9 L 1452.0 84.9 L 1459.7 92.5 L 1459.7 121.6 L 1434.0 121.6 Z" fill="#8ccaf8"/>
<path d="M 1452.0 84.9 L 1459.7 92.5 L 1452.0 92.5 Z" fill="#c6e4fb"/>
<rect x="1414.1" y="101.4" width="30.0" height="21.4" fill="#6a7180" stroke="#d2d4d8" stroke-width="1.2"/>
<circle cx="1443.6" cy="122.5" r="9.9" fill="#6a7180" stroke="#d2d4d8" stroke-width="1.2"/>
<path d="M 1414.1 101.4 H 1444.1 V 122.9 H 1414.1 Z" fill="none" stroke="#d2d4d8" stroke-width="1.2"/>
<rect x="1411.8" y="121.3" width="4.0" height="4.0" fill="#dcdcdc"/>
<rect x="1472.7" y="98.4" width="12.2" height="9.9" fill="#6a7180" stroke="#d2d4d8" stroke-width="1.2"/>
<circle cx="1486.5" cy="108.0" r="4.1" fill="#6a7180" stroke="#d2d4d8" stroke-width="1.2"/>
<rect x="1470.9" y="107.1" width="3.1" height="3.1" fill="#dcdcdc"/>
<path d="M1488.5 88.9L1489.6 92.6L1493.0 90.8L1491.1 94.2L1494.9 95.3L1491.1 96.4L1493.0 99.8L1489.6 98.0L1488.5 101.7L1487.4 98.0L1483.9 99.8L1485.8 96.4L1482.1 95.3L1485.8 94.2L1483.9 90.8L1487.4 92.6z" fill="#fbd27c"/>
<rect x="1472.7" y="132.0" width="12.2" height="10.7" fill="#6a7180" stroke="#d2d4d8" stroke-width="1.2"/>
<circle cx="1488.8" cy="142.7" r="4.6" fill="#6a7180" stroke="#d2d4d8" stroke-width="1.2"/>
<rect x="1470.9" y="141.5" width="3.1" height="3.1" fill="#dcdcdc"/>
<g transform="translate(1483.4 137.9) rotate(-46.3)"><path d="M0 0L3.9 -2.3V2.3z" fill="#c8c8c8" stroke="#3b4453" stroke-width="0.5"/><rect x="3.9" y="-2.3" width="8.0" height="4.6" fill="#fbd27c" stroke="#3b4453" stroke-width="0.5"/><path d="M11.9 -2.3h0.7a2.3 2.3 0 0 1 0 4.6h-0.7z" fill="#f0505a"/></g>
<path d="M 1471.2 163.4 L 1482.6 163.4 L 1493.1 176.1 L 1483.4 184.8 L 1471.2 172.6 Z" fill="#dcdcdc"/>
<circle cx="1475.3" cy="167.5" r="1.4" fill="#3b4453"/>
<path d="M 1477.3 171.8 L 1485.7 180.2" fill="none" stroke="#666" stroke-width="1" stroke-dasharray="2 1.2"/>
<g transform="translate(1483.4 172.6) rotate(-45.4)"><path d="M0 0L3.8 -2.3V2.3z" fill="#c8c8c8" stroke="#3b4453" stroke-width="0.5"/><rect x="3.8" y="-2.3" width="7.9" height="4.6" fill="#fbd27c" stroke="#3b4453" stroke-width="0.5"/><path d="M11.7 -2.3h0.6a2.3 2.3 0 0 1 0 4.6h-0.6z" fill="#f0505a"/></g>
<rect x="1672.0" y="89.1" width="30.0" height="41.8" fill="#dcdcdc"/>
<rect x="1675.1" y="92.2" width="20.8" height="15.3" fill="#8ccaf8" stroke="#3b4453" stroke-width="0.9"/>
<path d="M 1676.8 115.4 H 1694.7 M 1676.8 123.3 H 1691.7" fill="none" stroke="#555" stroke-width="1"/>
<path d="M 1681.2 112.5 V 118.2 M 1691.1 120.5 V 126.0" fill="none" stroke="#555" stroke-width="1.7"/>
<path d="M 1693.7 124.1 L 1702.7 119.0 L 1714.5 132.1 L 1708.2 137.2 Z" fill="#fbd27c" stroke="#3b4453" stroke-width="0.7"/>
<path d="M 1702.7 119.0 L 1706.8 116.4 L 1710.4 119.0 L 1715.0 115.7 L 1718.4 119.3 L 1714.8 123.4 L 1718.4 128.7 L 1714.5 132.1 Z" fill="#f4f4f4" stroke="#3b4453" stroke-width="0.5"/>
<path d="M1753.9 100.9L1747.85 90.42A12.1 12.1 0 0 1 1759.95 90.42z" fill="#fbb03b"/>
<path d="M1753.9 100.9L1759.95 90.42A12.1 12.1 0 0 1 1766.00 100.90z" fill="#f7863a"/>
<path d="M1753.9 100.9L1766.00 100.90A12.1 12.1 0 0 1 1759.95 111.38z" fill="#e9534f"/>
<path d="M1753.9 100.9L1759.95 111.38A12.1 12.1 0 0 1 1747.85 111.38z" fill="#8656f0"/>
<path d="M1753.9 100.9L1747.85 111.38A12.1 12.1 0 0 1 1741.80 100.90z" fill="#1aa6cc"/>
<path d="M1753.9 100.9L1741.80 100.90A12.1 12.1 0 0 1 1747.85 90.42z" fill="#4ccf8c"/>
<rect x="1742.1" y="125.1" width="23.8" height="1.2" fill="#dcdcdc"/>
<rect x="1742.1" y="128.9" width="23.8" height="3.2" fill="#dcdcdc"/>
<rect x="1742.1" y="135.3" width="23.8" height="4.5" fill="#dcdcdc"/>
<rect x="1742.1" y="143.2" width="23.8" height="5.8" fill="#dcdcdc"/>
<path d="M1742.1 164.3H1765" stroke="#dcdcdc" stroke-width="1.1" stroke-dasharray="2.2 1.6"/>
<path d="M1742.1 168.3H1765" stroke="#dcdcdc" stroke-width="1.1" stroke-dasharray="5 1.6"/>
<path d="M1742.1 172.6H1765" stroke="#dcdcdc" stroke-width="1.1" stroke-dasharray="3 1.4"/>
<path d="M1742.1 176.7H1765" stroke="#dcdcdc" stroke-width="1.1" stroke-dasharray="6 1.6 2 1.6"/>
<path d="M1742.1 180.7H1765" stroke="#dcdcdc" stroke-width="1.1" stroke-dasharray="4 1.6"/>
<path d="M 2059.9 96.5 H 2054.1 V 135.5 H 2059.9 M 2080.8 135.5 H 2086.6 V 114.0" fill="none" stroke="#f2f2f2" stroke-width="1.25"/>
<rect x="2063.2" y="101.5" width="14.7" height="11.2" fill="#4a6a8c" stroke="#6cb8f0" stroke-width="1.3"/>
<circle cx="2070.4" cy="124.5" r="7.3" fill="#6a7180" stroke="#d2d4d8" stroke-width="1.3"/>
<path d="M2088.2 88.7L2090.4 95.6L2096.8 92.3L2093.5 98.7L2100.4 100.9L2093.5 103.2L2096.8 109.6L2090.4 106.3L2088.2 113.1L2085.9 106.3L2079.5 109.6L2082.8 103.2L2076.0 100.9L2082.8 98.7L2079.5 92.3L2085.9 95.6z" fill="#fbd27c"/>
<rect x="2116.2" y="92.4" width="8.6" height="7.2" fill="#4a6a8c" stroke="#6cb8f0" stroke-width="1.2"/>
<circle cx="2120.4" cy="105.4" r="4.4" fill="#6a7180" stroke="#d2d4d8" stroke-width="1.2"/>
<path d="M 2128.2 89.2 H 2131.9 V 96.8 M 2131.9 107.4 V 112.7 H 2128.2" fill="none" stroke="#f2f2f2" stroke-width="1.2"/>
<path d="M 2128.8 98.8 L 2135.5 105.7 M 2135.5 98.8 L 2128.8 105.7" fill="none" stroke="#f05058" stroke-width="2.4"/>
<path d="M 2117.0 125.2 H 2113.3 V 145.8 H 2117.0 M 2124.1 125.2 H 2127.7 V 145.8 H 2124.1" fill="none" stroke="#f2f2f2" stroke-width="1.2"/>
<rect x="2117.3" y="128.4" width="6.5" height="5.0" fill="#4a6a8c" stroke="#6cb8f0" stroke-width="1.2"/>
<circle cx="2120.4" cy="139.5" r="3.4" fill="#6a7180" stroke="#d2d4d8" stroke-width="1.2"/>
<g transform="translate(2124.6 149.1) rotate(-43.2)"><path d="M0 0L4.4 -2.6V2.6z" fill="#c8c8c8" stroke="#3b4453" stroke-width="0.5"/><rect x="4.4" y="-2.6" width="9.1" height="5.2" fill="#fbd27c" stroke="#3b4453" stroke-width="0.5"/><path d="M13.5 -2.6h0.8a2.6 2.6 0 0 1 0 5.2h-0.8z" fill="#f0505a"/></g>
<path d="M 2118.8 161.2 H 2115.2 V 181.6 H 2118.8 M 2126.2 161.2 H 2129.8 V 168.0" fill="none" stroke="#f2f2f2" stroke-width="1.2"/>
<rect x="2119.1" y="164.6" width="7.0" height="4.9" fill="#3f7a5e" stroke="#4fd86a" stroke-width="1.2"/>
<circle cx="2122.5" cy="175.5" r="3.5" fill="#3f7a5e" stroke="#4fd86a" stroke-width="1.2"/>
<path d="M0 0V15.6L3.6 12.4L6.2 18.4L8.8 17.2L6.2 11.4H11z" fill="#fff" stroke="#3b4453" stroke-width="0.5" transform="translate(2128.2 171.9) scale(0.72)"/>
<rect x="2180.0" y="107.0" width="42.0" height="9.6" fill="#fbd27c"/>
<path d="M 2182.5 107.0 V 111.7 M 2184.9 107.0 V 109.9 M 2187.4 107.0 V 111.0 M 2189.8 107.0 V 109.9 M 2192.4 107.0 V 111.7 M 2194.9 107.0 V 109.9 M 2197.3 107.0 V 111.0 M 2199.8 107.0 V 109.9 M 2202.2 107.0 V 111.7 M 2204.7 107.0 V 109.9 M 2207.1 107.0 V 111.0 M 2209.6 107.0 V 109.9 M 2212.1 107.0 V 111.7 M 2214.6 107.0 V 109.9 M 2217.1 107.0 V 111.0 M 2219.5 107.0 V 109.9" fill="none" stroke="#b89a50" stroke-width="1"/>
<rect x="2268.8" y="99.1" width="14.3" height="13.9" fill="#f4f4f4"/>
<rect x="2271.6" y="101.8" width="1.7" height="1.5" fill="#1f86e8"/>
<path d="M 2274.6 102.5 H 2280.3" fill="none" stroke="#1f86e8" stroke-width="1.4"/>
<rect x="2271.6" y="105.2" width="1.7" height="1.5" fill="#1f86e8"/>
<path d="M 2274.6 106.0 H 2280.3" fill="none" stroke="#1f86e8" stroke-width="1.4"/>
<rect x="2271.6" y="108.7" width="1.7" height="1.5" fill="#1f86e8"/>
<path d="M 2274.6 109.4 H 2280.3" fill="none" stroke="#1f86e8" stroke-width="1.4"/>
<path d="M 2269.8 89.2 L 2263.0 95.7 L 2267.7 95.5 L 2265.1 100.4 L 2273.7 94.7 L 2268.8 94.5 Z" fill="#fbd27c"/>
<path d="M0 0V15.6L3.6 12.4L6.2 18.4L8.8 17.2L6.2 11.4H11z" fill="#fff" stroke="#3b4453" stroke-width="0.5" transform="translate(2258.8 96.5) scale(0.85)"/>
<rect x="2259.4" y="125.5" width="21.3" height="21.3" fill="none" stroke="#4fd86a" stroke-width="1.2" stroke-dasharray="2.6 1.6"/>
<rect x="2262.0" y="131.8" width="10.7" height="12.0" fill="#7ad89a"/>
<rect x="2266.2" y="128.0" width="11.7" height="11.7" fill="#7ad89a" stroke="#3b4453" stroke-width="0.8"/>
<path d="M0 0V15.6L3.6 12.4L6.2 18.4L8.8 17.2L6.2 11.4H11z" fill="#fff" stroke="#3b4453" stroke-width="0.5" transform="translate(2274.0 136.0) scale(0.72)"/>
<rect x="2262.0" y="160.9" width="17.0" height="23.8" fill="#dcdcdc"/>
<rect x="2265.1" y="164.3" width="10.7" height="4.2" fill="#666"/>
<rect x="2265.1" y="171.3" width="2.5" height="2.5" fill="#666"/>
<rect x="2265.1" y="175.3" width="2.5" height="2.5" fill="#666"/>
<rect x="2265.1" y="179.3" width="2.5" height="2.5" fill="#666"/>
<rect x="2269.1" y="171.3" width="2.5" height="2.5" fill="#666"/>
<rect x="2269.1" y="175.3" width="2.5" height="2.5" fill="#666"/>
<rect x="2269.1" y="179.3" width="2.5" height="2.5" fill="#666"/>
<rect x="2273.1" y="171.3" width="2.5" height="2.5" fill="#666"/>
<rect x="2273.1" y="175.3" width="2.5" height="2.5" fill="#666"/>
<rect x="2273.1" y="179.3" width="2.5" height="2.5" fill="#666"/>
<rect x="2314.9" y="93.1" width="33.2" height="37.0" fill="#deb07a"/>
<path d="M 2322.7 94.1 V 92.6 Q 2322.7 90.7 2324.8 90.7 H 2327.0 V 89.1 Q 2327.0 87.7 2328.4 87.7 H 2333.7 Q 2335.0 87.7 2335.0 89.1 V 90.7 H 2337.3 Q 2339.5 90.7 2339.5 92.6 V 94.1 Z" fill="#ffffff"/>
<path d="M 2325.9 103.0 H 2343.3 L 2353.0 112.7 V 135.9 H 2325.9 Z" fill="#dcdcdc" stroke="#3b4453" stroke-width="0.8"/>
<path d="M 2343.3 103.0 L 2353.0 112.7 H 2343.3 Z" fill="#f4f4f4"/>
<rect x="2378.9" y="89.1" width="18.0" height="20.9" fill="#dcdcdc"/>
<path d="M 2382.1 93.4 H 2393.9 M 2382.1 99.5 H 2389.6 M 2382.1 105.5 H 2390.7" fill="none" stroke="#888" stroke-width="1"/>
<path d="M 2389.1 96.1 L 2391.2 97.7 L 2400.9 108.9 L 2398.7 110.2 Z" fill="#fff" stroke="#3b4453" stroke-width="0.5"/>
<path d="M 2403.0 98.2 L 2403.3 101.4 L 2394.4 110.5 L 2392.6 108.9 Z" fill="#fff" stroke="#3b4453" stroke-width="0.5"/>
<circle cx="2392.6" cy="110.2" r="2.0" fill="none" stroke="#fff" stroke-width="1.8"/>
<circle cx="2400.3" cy="110.2" r="2.0" fill="none" stroke="#fff" stroke-width="1.8"/>
<path d="M 2381.9 125.2 H 2391.2 L 2393.9 127.9 V 144.8 H 2381.9 Z" fill="#dcdcdc"/>
<path d="M 2386.1 129.1 H 2396.1 L 2400.9 133.9 V 148.8 H 2386.1 Z" fill="#dcdcdc" stroke="#3b4453" stroke-width="0.9"/>
<path d="M 2396.1 129.1 L 2400.9 133.9 H 2396.1 Z" fill="#f6f6f6"/>
<path d="M 2453.0 93.1 H 2474.0 V 108.1 H 2501.0 V 129.0 H 2453.0 Z" fill="#dcdcdc"/>
<path d="M2028.0 207.0L2033.6 212.6" stroke="#d2d4d8" stroke-width="1.3"/><path d="M2035.1999999999998 208.0V214.2H2029.0z" fill="#d2d4d8"/>
<path d="M2510.8 206.8L2516.4 212.4" stroke="#d2d4d8" stroke-width="1.3"/><path d="M2518.0 207.8V214.0H2511.8z" fill="#d2d4d8"/></svg>
<span class="t" style="left:727.0px;top:82px;font-size:60.7px;color:#dcdcdc;transform:scaleX(0.9591);">A</span>
<span class="t" style="left:24.6px;top:146px;font-size:18px;color:#f1f1f1;transform:scaleX(0.9354);">Line</span>
<span class="t" style="left:72.8px;top:146px;font-size:18px;color:#f1f1f1;transform:scaleX(0.9610);">Polyline</span>
<span class="t" style="left:152.9px;top:146px;font-size:18px;color:#f1f1f1;transform:scaleX(0.9207);">Circle</span>
<span class="t" style="left:228.7px;top:146px;font-size:18px;color:#f1f1f1;transform:scaleX(0.9473);">Arc</span>
<span class="t" style="left:141.3px;top:203px;font-size:18px;color:#f1f1f1;transform:scaleX(0.9489);">Draw</span>
<span class="t" style="left:379.2px;top:93px;font-size:18px;color:#f1f1f1;transform:scaleX(1.0541);">Move</span>
<span class="t" style="left:379.9px;top:129px;font-size:18px;color:#f1f1f1;">Copy</span>
<span class="t" style="left:380.0px;top:165px;font-size:18px;color:#f1f1f1;transform:scaleX(0.9626);">Stretch</span>
<span class="t" style="left:485.3px;top:93px;font-size:18px;color:#f1f1f1;transform:scaleX(0.9850);">Rotate</span>
<span class="t" style="left:485.2px;top:129px;font-size:18px;color:#f1f1f1;transform:scaleX(1.0616);">Mirror</span>
<span class="t" style="left:486.1px;top:165px;font-size:18px;color:#f1f1f1;transform:scaleX(0.8983);">Scale</span>
<span class="t" style="left:589.9px;top:93px;font-size:18px;color:#f1f1f1;transform:scaleX(0.9630);">Trim</span>
<span class="t" style="left:589.4px;top:129px;font-size:18px;color:#f1f1f1;transform:scaleX(0.9612);">Fillet</span>
<span class="t" style="left:590.3px;top:165px;font-size:18px;color:#f1f1f1;transform:scaleX(0.9667);">Array</span>
<span class="t" style="left:485.2px;top:203px;font-size:18px;color:#f1f1f1;transform:scaleX(1.0874);">Modify</span>
<span class="t" style="left:731.4px;top:146px;font-size:18px;color:#f1f1f1;transform:scaleX(0.8926);">Text</span>
<span class="t" style="left:782.4px;top:146px;font-size:18px;color:#f1f1f1;transform:scaleX(1.0182);">Dimension</span>
<span class="t" style="left:909.4px;top:93px;font-size:18px;color:#f1f1f1;transform:scaleX(0.9321);">Linear</span>
<span class="t" style="left:909.4px;top:129px;font-size:18px;color:#f1f1f1;transform:scaleX(0.9394);">Leader</span>
<span class="t" style="left:909.9px;top:165px;font-size:18px;color:#f1f1f1;transform:scaleX(0.9443);">Table</span>
<span class="t" style="left:798.9px;top:203px;font-size:18px;color:#f1f1f1;transform:scaleX(1.0237);">Annotation</span>
<span class="t" style="left:1021.6px;top:146px;font-size:18px;color:#f1f1f1;transform:scaleX(0.9155);">Layer</span>
<span class="t" style="left:1001.7px;top:171px;font-size:18px;color:#f1f1f1;transform:scaleX(0.9797);">Properties</span>
<span class="t" style="left:1208.7px;top:92px;font-size:18px;color:#f1f1f1;transform:scaleX(1.0136);">hiperbole</span>
<span class="t" style="left:1267.4px;top:129px;font-size:18px;color:#f1f1f1;transform:scaleX(0.9773);">Make Current</span>
<span class="t" style="left:1267.4px;top:165px;font-size:18px;color:#f1f1f1;transform:scaleX(0.9664);">Match Layer</span>
<span class="t" style="left:1163.4px;top:203px;font-size:18px;color:#f1f1f1;transform:scaleX(0.9173);">Layers</span>
<span class="t" style="left:1413.5px;top:144px;font-size:18px;color:#f1f1f1;transform:scaleX(0.9853);">Insert</span>
<span class="t" style="left:1501.8px;top:93px;font-size:18px;color:#f1f1f1;transform:scaleX(0.9403);">Create</span>
<span class="t" style="left:1501.1px;top:129px;font-size:18px;color:#f1f1f1;transform:scaleX(0.9928);">Edit</span>
<span class="t" style="left:1501.1px;top:165px;font-size:18px;color:#f1f1f1;transform:scaleX(1.0300);">Edit Attributes</span>
<span class="t" style="left:1492.6px;top:203px;font-size:18px;color:#f1f1f1;transform:scaleX(0.9537);">Block</span>
<span class="t" style="left:1669.9px;top:147px;font-size:18px;color:#f1f1f1;transform:scaleX(1.0132);">Match</span>
<span class="t" style="left:1653.7px;top:172px;font-size:18px;color:#f1f1f1;transform:scaleX(0.9772);">Properties</span>
<span class="t" style="left:1809.1px;top:93px;font-size:18px;color:#f1f1f1;transform:scaleX(0.9041);">ByLayer</span>
<span class="t" style="left:1877.9px;top:129px;font-size:18px;color:#f1f1f1;transform:scaleX(0.9041);">ByLayer</span>
<span class="t" style="left:1877.9px;top:165px;font-size:18px;color:#f1f1f1;transform:scaleX(0.9041);">ByLayer</span>
<span class="t" style="left:1782.8px;top:203px;font-size:18px;color:#f1f1f1;transform:scaleX(0.9897);">Properties</span>
<span class="t" style="left:2051.8px;top:146px;font-size:18px;color:#f1f1f1;">Group</span>
<span class="t" style="left:2056.4px;top:203px;font-size:18px;color:#f1f1f1;transform:scaleX(0.9935);">Groups</span>
<span class="t" style="left:2166.9px;top:146px;font-size:18px;color:#f1f1f1;transform:scaleX(0.9621);">Measure</span>
<span class="t" style="left:2180.9px;top:203px;font-size:18px;color:#f1f1f1;transform:scaleX(1.0021);">Utilities</span>
<span class="t" style="left:2312.8px;top:146px;font-size:18px;color:#f1f1f1;transform:scaleX(0.9095);">Paste</span>
<span class="t" style="left:2321.4px;top:203px;font-size:18px;color:#f1f1f1;transform:scaleX(1.0268);">Clipboard</span>
<span class="t" style="left:2458.8px;top:145px;font-size:18px;color:#f1f1f1;transform:scaleX(0.8980);">Base</span>
<span class="t" style="left:2438.2px;top:203px;font-size:18px;color:#f1f1f1;transform:scaleX(0.9311);">View</span>
</section>
<nav id="doctabs">
<div style="left:4px;top:264.9px;width:2548.2px;height:6.1px;background:#3b4453;"></div>
<div style="left:4px;top:264.9px;width:38px;height:8.7px;background:#3b4453;"></div>
<svg id="doctab-icons" class="ov" width="2556" height="1528" viewBox="0 0 2556 1528"><path d="M88.9 265L104.4 229.2H220.9L205.9 265z" fill="#3b4453"/>
<path d="M18.3 258.6L28.6 235.2M267.4 258.6L277.7 235.2" stroke="#4a5666" stroke-width="1.3"/>
<path d="M191.4 241.7L202.6 252.6M202.6 241.7L191.4 252.6" stroke="#a4a8b4" stroke-width="2.7"/>
<path d="M233 247.3H251.3M242.2 238.2V256.6" stroke="#e6e6e6" stroke-width="2.8"/></svg>
<span class="t" style="left:42.0px;top:239px;font-size:18px;color:#f1f1f1;transform:scaleX(0.9385);">Start</span>
<span class="t" style="left:114.1px;top:239px;font-size:18px;color:#ffffff;font-weight:700;transform:scaleX(0.9775);">conica*</span>
</nav>
<main id="viewport">
<aside id="layerpalette">
<div style="left:4.9px;top:278px;width:33px;height:1189px;background:#3b4453;"></div>
<span class="t" style="left:14.3px;top:973.1px;font-size:18px;color:#f1f1f1;transform-origin:0 0;transform:rotate(-90deg) scaleX(0.9745)">Layer Properties Manager</span>
</aside>
<div id="vplabel" style="left:0;top:0"><span class="t" style="left:46.5px;top:280px;font-size:18px;color:#e6e6e6;transform:scaleX(0.8056);">[</span><span class="t" style="left:54.1px;top:278px;font-size:18px;color:#e6e6e6;transform:scaleX(0.9240);">−</span><span class="t" style="left:66.4px;top:280px;font-size:18px;color:#e6e6e6;transform:scaleX(0.7500);">]</span><span class="t" style="left:71.6px;top:280px;font-size:18px;color:#e6e6e6;transform:scaleX(0.9978);">[Custom View][Wireframe]</span></div>
<svg id="drawing" class="ov" width="2556" height="1528" viewBox="0 0 2556 1528"><rect x="2464.7" y="291.2" width="15.8" height="4.8" fill="#e8e8e8" stroke="#14181f" stroke-width="1"/>
<rect x="2498.5" y="283" width="11.5" height="11.5" fill="#e8e8e8" stroke="#14181f" stroke-width="1"/><rect x="2495" y="286.2" width="12" height="11.6" fill="#e8e8e8" stroke="#14181f" stroke-width="1"/><rect x="2498.2" y="289.6" width="5.6" height="5" fill="#1b2029"/>
<path d="M2526 285L2537.6 296M2537.6 285L2526 296" stroke="#ececec" stroke-width="3.4"/>
<g fill="none" stroke="#ffffff" stroke-width="1.0"><ellipse cx="1164.3" cy="429.4" rx="166.7" ry="73.9"/><ellipse cx="1164.3" cy="1025" rx="166.7" ry="74.3"/><path d="M1006.4 405.4L1322.2 1045.8"/><path d="M1320.9 456.1L1005.7 998.6"/><path d="M1112.2 499.6L1216.9 954.0"/><path d="M1216.5 358.4L1112.1 1092.8"/></g>
<path d="M1162.0 503.3C1162.9 507.3 1165.7 519.3 1167.5 527.1C1169.4 534.9 1171.3 542.9 1173.0 550.3C1174.8 557.6 1176.6 564.4 1178.3 571.2C1180.0 577.9 1181.6 585.2 1183.2 590.9C1184.8 596.6 1186.4 601.0 1187.8 605.4C1189.3 609.7 1190.5 613.2 1191.9 617.0C1193.3 620.7 1194.8 624.6 1196.2 628.0C1197.7 631.4 1199.2 634.6 1200.6 637.2C1201.9 639.9 1203.1 641.9 1204.3 643.6C1205.6 645.3 1206.7 647.0 1207.8 647.4C1208.9 647.8 1210.0 646.8 1211.0 645.9C1212.0 645.1 1212.7 644.2 1213.6 642.5C1214.5 640.8 1215.6 638.2 1216.5 635.8C1217.5 633.4 1218.4 631.6 1219.4 628.0C1220.5 624.3 1221.7 619.3 1222.9 614.1C1224.1 608.8 1225.3 603.4 1226.7 596.7C1228.0 589.9 1229.6 581.2 1231.0 573.5C1232.5 565.7 1233.9 559.0 1235.4 550.3C1236.8 541.6 1238.3 531.0 1239.7 521.3C1241.2 511.6 1242.6 502.2 1244.1 492.3C1245.5 482.4 1247.0 472.0 1248.4 461.9C1249.9 451.7 1251.3 441.7 1252.8 431.4C1254.2 421.2 1255.7 410.8 1257.1 400.4C1258.6 390.0 1260.7 374.3 1261.4 369.1Z" fill="none" stroke="#00ffff" stroke-width="1.0"/>
<path d="M1161.4 1099.4C1162.3 1094.0 1164.7 1077.7 1166.4 1066.7C1168.1 1055.7 1169.8 1044.9 1171.6 1033.3C1173.4 1021.7 1175.5 1009.2 1177.4 997.1C1179.3 985.0 1181.3 972.9 1183.2 960.9C1185.1 948.8 1187.1 936.7 1189.0 924.6C1190.9 912.6 1193.1 898.3 1194.8 888.4C1196.5 878.5 1197.7 872.5 1199.1 865.2C1200.6 858.0 1202.1 850.5 1203.5 844.9C1204.8 839.4 1206.0 835.3 1207.2 831.9C1208.5 828.5 1209.7 826.3 1210.7 824.6C1211.8 822.9 1212.7 822.3 1213.6 821.7C1214.6 821.2 1215.6 820.9 1216.5 821.2C1217.5 821.4 1218.5 822.1 1219.4 823.2C1220.4 824.3 1221.0 825.1 1222.3 827.5C1223.6 830.0 1225.6 834.1 1227.2 838.0C1228.9 841.8 1230.6 845.6 1232.5 850.7C1234.3 855.8 1236.3 862.4 1238.3 868.7C1240.2 875.0 1242.4 882.3 1244.1 888.4C1245.7 894.5 1247.0 899.4 1248.4 905.2C1249.9 911.0 1251.3 916.8 1252.8 923.2C1254.2 929.6 1255.7 936.5 1257.1 943.5C1258.6 950.5 1260.7 961.6 1261.4 965.2Z" fill="none" stroke="#00ffff" stroke-width="1.0"/>
<path d="M999.1 1034.8C1002.3 1027.4 1010.5 1007.4 1018.0 990.7C1025.5 974.1 1036.6 949.7 1044.1 934.8C1051.5 919.9 1056.6 912.1 1062.9 901.4C1069.2 890.8 1076.6 879.2 1081.7 871.0C1086.9 862.8 1090.0 858.0 1093.9 852.2C1097.8 846.4 1100.7 841.8 1104.9 836.2C1109.2 830.7 1114.6 823.9 1119.4 818.8C1124.3 813.8 1129.6 809.3 1133.9 805.8C1138.3 802.3 1141.6 800.1 1145.5 798.0C1149.4 795.8 1153.8 794.0 1157.1 792.8C1160.4 791.5 1162.6 791.1 1165.2 790.7C1167.9 790.3 1170.1 790.3 1173.0 790.4C1175.9 790.6 1179.5 791.0 1182.6 791.6C1185.7 792.2 1188.9 792.9 1191.9 794.2C1194.9 795.5 1197.7 797.2 1200.6 799.4C1203.5 801.6 1206.4 804.0 1209.3 807.2C1212.2 810.5 1215.1 814.5 1218.0 818.8C1220.9 823.2 1224.0 828.5 1226.7 833.3C1229.3 838.2 1231.5 842.5 1233.9 847.8C1236.3 853.1 1239.0 859.4 1241.2 865.2C1243.3 871.0 1245.0 876.3 1247.0 882.6C1248.9 888.9 1250.8 894.9 1252.8 902.9C1254.7 910.9 1256.6 920.8 1258.6 930.4C1260.5 940.1 1262.6 951.4 1264.3 960.9C1266.1 970.3 1267.5 978.3 1269.0 987.0C1270.4 995.7 1271.6 1003.4 1273.0 1013.0C1274.5 1022.7 1276.1 1034.3 1277.7 1044.9C1279.2 1055.6 1281.5 1071.5 1282.3 1076.8Z" fill="none" stroke="#ffff00" stroke-width="1.0"/>
<ellipse cx="1164.6" cy="876.1" rx="82.9" ry="37.5" fill="none" stroke="#ff0000" stroke-width="1.0"/>
<ellipse cx="1151.7" cy="892.8" rx="70.6" ry="109.6" transform="rotate(17.4 1151.7 892.8)" fill="none" stroke="#00ff00" stroke-width="1.0"/>
<defs><linearGradient id="gz" x1="0" x2="1"><stop offset="0" stop-color="#3c64a4"/><stop offset="0.72" stop-color="#6e96d8"/><stop offset="1" stop-color="#4a72b4"/></linearGradient><linearGradient id="gx" x1="0" x2="0" y1="0" y2="1"><stop offset="0" stop-color="#c06c74"/><stop offset="0.4" stop-color="#f2a2a4"/><stop offset="1" stop-color="#a04c54"/></linearGradient><linearGradient id="gy" x1="0" x2="1" y1="0" y2="1"><stop offset="0" stop-color="#3a7e3a"/><stop offset="0.5" stop-color="#3a7a3a"/><stop offset="1" stop-color="#2c622c"/></linearGradient></defs>
<path d="M1169 1011.7L1183.8 992L1189.7 991.1L1190.9 995.7L1173.7 1020.2L1169 1021.2z" fill="url(#gy)"/>
<path d="M1169 1021.4L1232.6 1030.3L1236 1034.9L1232.2 1038.7L1163.2 1027.3L1164 1022z" fill="url(#gx)"/>
<path d="M1160 961.2L1164.5 957L1169.05 961.2V1025.6Q1164.5 1027.6 1160 1025.6z" fill="url(#gz)"/>
<path d="M1161 936.2H1178.9L1161.7 954.5H1178.9" fill="none" stroke="#0a6cff" stroke-width="1.1"/>
<path d="M1183.4 970.5L1192.4 978.9L1200.8 971.1M1192.4 978.9V987.7" fill="none" stroke="#10a010" stroke-width="1.1"/>
<path d="M1228 1010.9L1245.9 1028.7M1245.9 1012.2L1228 1029.8" fill="none" stroke="#e02020" stroke-width="1.1"/>
<path d="M1672.5 936V1062.9" stroke="#8484ff" stroke-width="1.2"/><path d="M1658.2 1040.8L1702.6 981.2" stroke="#7cf07c" stroke-width="1.2"/><path d="M1628 1015.4L1763.9 1033.5" stroke="#f88080" stroke-width="1.2"/><rect x="1668.4" y="1016.4" width="8.2" height="8.2" fill="#212830" stroke="#ffffff" stroke-width="1.2"/></svg>
<svg id="viewcube" class="ov" width="2556" height="1528" viewBox="0 0 2556 1528"><defs><radialGradient id="shade" cx="0.5" cy="0.5" r="0.5"><stop offset="0" stop-color="#3a414c" stop-opacity="0.9"/><stop offset="1" stop-color="#212830" stop-opacity="0"/></radialGradient></defs>
<path fill-rule="evenodd" fill="#434a55" d="M2332 473a96.8 48.8 0 1 0 193.6 0a96.8 48.8 0 1 0 -193.6 0zM2353.9 471a75.4 34.5 0 1 0 150.8 0a75.4 34.5 0 1 0 -150.8 0z"/>
<ellipse cx="2425" cy="478" rx="52" ry="24" fill="url(#shade)"/>
<defs><linearGradient id="cf" x1="0" y1="0" x2="0" y2="1"><stop offset="0" stop-color="#adb1b6"/><stop offset="1" stop-color="#96999f"/></linearGradient><linearGradient id="cr" x1="0" y1="0" x2="0" y2="1"><stop offset="0" stop-color="#a6aaaf"/><stop offset="1" stop-color="#8d9096"/></linearGradient></defs>
<path d="M2380.5 403.6L2407.8 376.9L2473.5 385L2454.6 413.2z" fill="#adb1b6"/>
<path d="M2380.5 403.6L2454.6 413.2L2453.3 481.4L2383.4 468.7z" fill="url(#cf)"/>
<path d="M2454.6 413.2L2473.5 385L2471.8 449.4L2453.3 481.4z" fill="url(#cr)"/>
<path d="M2380.5 403.6L2454.6 413.2L2473.5 385M2454.6 413.2L2453.3 481.4" fill="none" stroke="#7c8088" stroke-width="0.6"/>
<path d="M2394 400.5L2443 407V425L2394 418z" fill="#a4a8b4" opacity="0.85"/></svg>
<span class="t" style="left:2392.6px;top:429.4px;font-size:19.6px;font-weight:700;color:#4f5766;transform-origin:0 0;transform:matrix(0.75,0.1125,0,1.0,0,0)">FRONT</span>
<span class="t" style="left:2417.5px;top:388.8px;font-size:13.2px;font-weight:700;font-style:italic;color:#4f5766;transform-origin:0 0;transform:matrix(1.0,0.13,-0.5,0.55,0,0);letter-spacing:0.6px">TOP</span>
<span class="t" style="left:2456.6px;top:437.5px;font-size:12.5px;font-weight:700;color:#4f5766;transform-origin:0 0;transform:matrix(0.34,-0.66,0.04,1.0,0,0)">RIGHT</span>
<span class="t" style="left:2341.5px;top:439.5px;font-size:26px;font-weight:700;color:#c6c8cc;transform-origin:0 0;transform:matrix(1.15,0.2,-0.55,0.62,0,0)">W</span>
<span class="t" style="left:2509px;top:469.5px;font-size:25px;font-weight:700;color:#c6c8cc;transform-origin:0 0;transform:matrix(1.3,0.17,-0.35,0.68,0,0)">E</span>
<span class="t" style="left:2388px;top:502px;font-size:29px;font-weight:700;color:#c6c8cc;transform-origin:0 0;transform:matrix(1.25,0.13,-0.4,0.74,0,0)">S</span>
<div style="left:2395.2px;top:558px;width:68.5px;height:24.8px;background:#9b9da9;border-radius:4px;box-sizing:border-box;border:1.5px solid #8a8c99"></div>
<span class="t" style="left:2401.7px;top:563px;font-size:15.5px;color:#5a6070;transform:scaleX(0.9604);">WCS</span>
<svg id="wcs-arrow" class="ov" width="2556" height="1528" viewBox="0 0 2556 1528"><path d="M2445.4 566.8H2456.6L2451 573z" fill="#a9abb6" stroke="#7b7f8e" stroke-width="1"/></svg>
<div style="left:2503px;top:615.6px;width:46px;height:311.1px;background:#5d6168;border-radius:3px"></div>
<svg id="navbar" class="ov" width="2556" height="1528" viewBox="0 0 2556 1528"><g fill="none" stroke="#50545d" stroke-width="1.6">
<circle cx="2539.8" cy="623" r="4.6"/><path d="M2537 620.2L2542.6 625.8M2542.6 620.2L2537 625.8"/>
<path d="M2509.8 657.5a16 16 0 0 1 16-16H2541.5V657.5a16 16 0 0 1 -31.7 0z"/>
<circle cx="2525.6" cy="657" r="10.2" stroke-width="3"/><circle cx="2525.6" cy="657" r="5.5" fill="#50545d"/><path d="M2518.5 664.5L2513.8 669.6M2532.8 664.5L2537.6 669.6"/>
<path d="M2509 724C2512.5 722.5 2515 725 2517.5 728L2516.6 711.5C2516.6 708.8 2520.2 708.8 2520.4 711.5L2521.2 722L2521.6 706.8C2521.8 704 2525.6 704 2525.6 706.8L2525.8 721.6L2527.6 708.6C2528 706 2531.6 706.4 2531.4 709L2530.6 723L2534.4 713.8C2535.4 711.4 2538.6 712.6 2538 715L2533.6 732C2532.6 736 2530.6 738.4 2526.8 738.4H2521C2517.4 738.4 2514.4 734.4 2509 724z"/>
<path d="M2509.5 747.5L2531 769.5M2531 747.5L2509.5 769.5" stroke-width="1.8"/>
<path d="M2508 746V752.5L2514.5 746zM2532.5 746H2526L2532.5 752.5zM2508 771V764.5L2514.5 771z" fill="#50545d" stroke="none"/>
<circle cx="2532" cy="769" r="6.4" fill="#5d6168" stroke-width="1.8"/><path d="M2537 774L2542.6 779" stroke-width="3.4" stroke-linecap="round"/>
<path d="M2521.6 834V813.6H2517.6L2525 804.2L2532.4 813.6H2528.4V834z"/>
<path d="M2517 816.6C2510.5 818 2508.4 820.4 2508.4 822.6C2508.4 827 2516 829.6 2525 829.6C2534 829.6 2541.6 827 2541.6 822.6C2541.6 820.4 2539.5 818 2533 816.6"/><path d="M2512.6 827.6L2518.6 823V833z" fill="#50545d"/>
<rect x="2508.6" y="866.6" width="8" height="8.2"/><rect x="2520.2" y="866.6" width="8" height="8.2"/><rect x="2532" y="866.6" width="8" height="8.2"/>
<rect x="2508.6" y="880.2" width="23.6" height="19.4"/><path d="M2516 884V896L2526.6 890z" fill="#50545d" stroke="none"/>
<circle cx="2539.6" cy="918" r="4.6"/><path d="M2536.6 916.6H2542.6L2539.6 920.4z" fill="#50545d"/><path d="M2536.4 914.8H2542.8"/>
</g>
<path d="M2522.2 685.2h8l-4.0 4.4z" fill="#50545d"/>
<path d="M2522.2 790.4h8l-4.0 4.4z" fill="#50545d"/>
<path d="M2522.2 847.2h8l-4.0 4.4z" fill="#50545d"/>
<path d="M2506 697.6H2546M2506 859H2546" stroke="#585c64" stroke-width="1"/></svg>
</main>
<section id="cmdline">
<div style="left:559.4px;top:1290.8px;width:37px;height:183.2px;background:#2b313e;border-radius:4px 0 0 4px"></div>
<div style="left:596.2px;top:1290.8px;width:1435.8px;height:151.2px;background:#9a9b9d;border-radius:0 2px 0 0"></div>
<div style="left:596.2px;top:1442px;width:1435.8px;height:1.8px;background:#151b24;"></div>
<div style="left:596.2px;top:1443.8px;width:1435.8px;height:30.2px;background:#bfc0c2;border-radius:0 0 2.5px 0"></div>
<svg id="cmd-icons" class="ov" width="2556" height="1528" viewBox="0 0 2556 1528"><rect x="564.8" y="1297.6" width="2" height="1.6" fill="#c8c8c8"/>
<rect x="569.8" y="1297.6" width="2" height="1.6" fill="#c8c8c8"/>
<rect x="574.7" y="1297.6" width="2" height="1.6" fill="#c8c8c8"/>
<rect x="579.6" y="1297.6" width="2" height="1.6" fill="#c8c8c8"/>
<rect x="584.6" y="1297.6" width="2" height="1.6" fill="#c8c8c8"/>
<rect x="589.5" y="1297.6" width="2" height="1.6" fill="#c8c8c8"/>
<path d="M571.2 1319.4L583 1331M583 1319.4L571.2 1331" stroke="#dedede" stroke-width="2.5"/>
<path d="M567.5 1370.5L579.2 1359.2" stroke="#bcbcbc" stroke-width="3.4" stroke-linecap="round"/><path d="M586.6 1351.6a6 6 0 1 0 1.8 5.2l-4 1.2l-2.8-2.6z" fill="#bcbcbc" transform="rotate(8 582 1356)"/>
<rect x="603.4" y="1451.6" width="22.4" height="16.8" fill="#c8c9cb" stroke="#555" stroke-width="1.2"/><rect x="603.4" y="1451.6" width="22.4" height="4.4" fill="#555"/><path d="M606 1459.2L609.6 1461.8L606 1464.4M610.6 1465H615.6" fill="none" stroke="#555" stroke-width="1"/>
<path d="M630.5 1457.0h11l-5.5 5.6z" fill="#555"/>
<path d="M2015 1461.9H2026.9L2020.95 1456z" fill="#555"/></svg>
<span class="t m" style="left:599.9px;top:1306px;font-size:18.6px;color:#0c0c0c;transform:scaleX(0.9851);">Resuming SECTION command.</span>
<span class="t m" style="left:599.9px;top:1329px;font-size:18.6px;color:#0c0c0c;transform:scaleX(0.9851);">Specify first point on Section plane by [Object/Zaxis/View/XY/YZ/ZX/3points] &lt;3points&gt;: YZ</span>
<span class="t m" style="left:599.9px;top:1352px;font-size:18.6px;color:#0c0c0c;transform:scaleX(0.9851);">Specify a point on the YZ-plane &lt;0,0,0&gt;: 0.3,0,0</span>
<span class="t m" style="left:599.9px;top:1375px;font-size:18.6px;color:#0c0c0c;transform:scaleX(0.9851);">Command:</span>
<span class="t m" style="left:599.9px;top:1398px;font-size:18.6px;color:#0c0c0c;transform:scaleX(0.9851);">Command:</span>
<span class="t m" style="left:599.9px;top:1421px;font-size:18.6px;color:#0c0c0c;transform:scaleX(0.9851);">Command:</span>
<span class="t m" style="left:651.2px;top:1452px;font-size:18.6px;color:#666;font-style:italic;transform:scaleX(0.9851);">Type a command</span>
</section>
<footer id="statusbar">
<div style="left:4px;top:1473.8px;width:2548.2px;height:6.2px;background:#3b4453;"></div>
<div style="left:4px;top:1471px;width:38px;height:9px;background:#3b4453;"></div>
<svg id="layout-tabs" class="ov" width="2556" height="1528" viewBox="0 0 2556 1528"><path d="M17.3 1515.9L32.2 1479.8H122L107.1 1515.9z" fill="#3b4453"/>
<path d="M165.5 1509.7L175.6 1486.3M225 1509.7L235.1 1486.3" stroke="#4a5666" stroke-width="1.3"/>
<path d="M191 1498.4H209M200 1489.4V1507.4" stroke="#e6e6e6" stroke-width="2.8"/></svg>
<span class="t" style="left:41.7px;top:1491px;font-size:18px;color:#fff;font-weight:700;transform:scaleX(1.0635);">Model</span>
<span class="t" style="left:132.9px;top:1491px;font-size:18px;color:#f1f1f1;transform:scaleX(0.9088);">a3</span>
<div style="left:1683.9px;top:1484px;width:72.19999999999982px;height:35.9px;background:#3b4453;"></div>
<div style="left:1762px;top:1484px;width:96px;height:35.9px;background:#3b4453;"></div>
<div style="left:1863.9px;top:1484px;width:36.09999999999991px;height:35.9px;background:#3b4453;"></div>
<div style="left:1902px;top:1484px;width:155.5px;height:35.9px;background:#3b4453;"></div>
<div style="left:2060.2px;top:1484px;width:95.40000000000009px;height:35.9px;background:#3b4453;"></div>
<div style="left:2162px;top:1484px;width:158px;height:35.9px;background:#3b4453;"></div>
<div style="left:2326px;top:1484px;width:59.69999999999982px;height:35.9px;background:#3b4453;"></div>
<div style="left:2388px;top:1484px;width:35.90000000000009px;height:35.9px;background:#3b4453;"></div>
<div style="left:2430px;top:1484px;width:36px;height:35.9px;background:#3b4453;"></div>
<div style="left:2469.5px;top:1484px;width:3.699999999999818px;height:35.9px;background:#3b4453;"></div>
<div style="left:2478px;top:1484px;width:72px;height:35.9px;background:#3b4453;"></div>
<div style="left:2061px;top:1485px;width:34px;height:33.8px;background:#5f8fc6;"></div>
<div style="left:2097px;top:1485px;width:34px;height:33.8px;background:#5f8fc6;"></div>
<div style="left:2163px;top:1485px;width:34px;height:33.8px;background:#5f8fc6;"></div>
<svg id="status-icons" class="ov" width="2556" height="1528" viewBox="0 0 2556 1528"><path d="M1768 1495.4H1791M1768 1501.4H1791M1768 1507.6H1791M1773.4 1490V1513M1779.6 1490V1513M1785.6 1490V1513" stroke="#e6e6e6" stroke-width="1.7" fill="none"/>
<rect x="1806.7" y="1493.1" width="3.2" height="3.2" fill="#e6e6e6"/>
<rect x="1806.7" y="1500.0" width="3.2" height="3.2" fill="#e6e6e6"/>
<rect x="1806.7" y="1507.0" width="3.2" height="3.2" fill="#e6e6e6"/>
<rect x="1813.8" y="1493.1" width="3.2" height="3.2" fill="#e6e6e6"/>
<rect x="1813.8" y="1500.0" width="3.2" height="3.2" fill="#e6e6e6"/>
<rect x="1813.8" y="1507.0" width="3.2" height="3.2" fill="#e6e6e6"/>
<rect x="1820.9" y="1493.1" width="3.2" height="3.2" fill="#e6e6e6"/>
<rect x="1820.9" y="1500.0" width="3.2" height="3.2" fill="#e6e6e6"/>
<rect x="1820.9" y="1507.0" width="3.2" height="3.2" fill="#e6e6e6"/>
<path d="M1839.8 1499.1h12.3l-6.2 6.2z" fill="#e6e6e6"/>
<path d="M1869.9 1498.6H1880.9M1875.4 1493.1V1504.1" stroke="#e6e6e6" stroke-width="1.5"/><rect x="1879.1" y="1505" width="14.9" height="5.9" fill="#e6e6e6"/><rect x="1880.4" y="1506.2" width="1.6" height="3.6" fill="#3b4453"/>
<path d="M1909.4 1489.6V1513.6H1931.6" stroke="#e6e6e6" stroke-width="1.4" fill="none"/><rect x="1909.4" y="1505.8" width="7.6" height="7.6" fill="none" stroke="#e6e6e6" stroke-width="1.3"/>
<circle cx="1954.6" cy="1502" r="10.2" fill="none" stroke="#e6e6e6" stroke-width="1.4"/><path d="M1954.6 1502H1968M1954.6 1502L1963.6 1490" stroke="#e6e6e6" stroke-width="1.3" fill="none"/>
<path d="M1980.2 1499.0h11.6l-5.8 6z" fill="#e6e6e6"/>
<path d="M2016.2 1490V1513.6" stroke="#48d070" stroke-width="1.3"/><path d="M2007 1491.4L2024.4 1510.6" stroke="#e84a4a" stroke-width="1.3"/><rect x="2014.6" y="1499.8" width="3.4" height="3.4" fill="#3b4453" stroke="#e6e6e6" stroke-width="1"/>
<path d="M2040.2 1499.0h11.6l-5.8 6z" fill="#e6e6e6"/>
<path d="M2066.6 1510.6H2089.6M2066.6 1510.6L2083.6 1493" stroke="#fff" stroke-width="1.5" fill="none"/><rect x="2072.6" y="1499.8" width="4.6" height="4.6" fill="#fff"/>
<rect x="2106" y="1494" width="19.6" height="18.6" fill="none" stroke="#fff" stroke-width="1.5"/><rect x="2102.6" y="1490.8" width="6" height="6" fill="#5f8fc6" stroke="#fff" stroke-width="1.2"/>
<path d="M2137.8 1499.0h11.6l-5.8 6z" fill="#e6e6e6"/>
<path d="M 2178.2 1490.0 L 2181.8 1501.6 L 2180.9 1502.5 L 2182.2 1503.2 L 2188.9 1513.9 L 2180.0 1509.5 Q 2178.2 1507.8 2176.5 1509.5 L 2167.6 1513.9 L 2174.3 1503.2 L 2175.6 1502.5 L 2174.7 1501.6 Z" fill="#ffffff"/>
<circle cx="2187.5" cy="1495.6" r="3.7" fill="none" stroke="#fff" stroke-width="1.3"/>
<path d="M 2214.6 1490.0 L 2218.1 1501.6 L 2217.3 1502.5 L 2218.6 1503.2 L 2225.3 1513.9 L 2216.4 1509.5 Q 2214.6 1507.8 2212.8 1509.5 L 2203.9 1513.9 L 2210.6 1503.2 L 2211.9 1502.5 L 2211.1 1501.6 Z" fill="#dcdcdc"/>
<path d="M2224.6 1489.8L2220.6 1495.6H2223.6L2221.6 1500.2L2227 1493.8H2224z" fill="#dcdcdc"/>
<path d="M 2251.4 1490.0 L 2254.9 1501.6 L 2254.1 1502.5 L 2255.4 1503.2 L 2262.1 1513.9 L 2253.2 1509.5 Q 2251.4 1507.8 2249.6 1509.5 L 2240.7 1513.9 L 2247.4 1503.2 L 2248.7 1502.5 L 2247.9 1501.6 Z" fill="#dcdcdc"/>
<path d="M2301.9 1499.1h12.2l-6.1 6.2z" fill="#e6e6e6"/>
<g transform="translate(2344.2 1502)"><rect x="-2.6" y="-12.2" width="5.2" height="6" fill="#e6e6e6" transform="rotate(0)"/><rect x="-2.6" y="-12.2" width="5.2" height="6" fill="#e6e6e6" transform="rotate(45)"/><rect x="-2.6" y="-12.2" width="5.2" height="6" fill="#e6e6e6" transform="rotate(90)"/><rect x="-2.6" y="-12.2" width="5.2" height="6" fill="#e6e6e6" transform="rotate(135)"/><rect x="-2.6" y="-12.2" width="5.2" height="6" fill="#e6e6e6" transform="rotate(180)"/><rect x="-2.6" y="-12.2" width="5.2" height="6" fill="#e6e6e6" transform="rotate(225)"/><rect x="-2.6" y="-12.2" width="5.2" height="6" fill="#e6e6e6" transform="rotate(270)"/><rect x="-2.6" y="-12.2" width="5.2" height="6" fill="#e6e6e6" transform="rotate(315)"/><circle r="6.9" fill="none" stroke="#e6e6e6" stroke-width="4.6"/></g>
<path d="M2367.8 1499.0h11.6l-5.8 6z" fill="#e6e6e6"/>
<path d="M2394.4 1501.6H2417.4M2405.9 1490.2V1513.2" stroke="#e6e6e6" stroke-width="2.8"/>
<rect x="2436.2" y="1490.6" width="9" height="9" fill="none" stroke="#e6e6e6" stroke-width="1.2"/><circle cx="2454.6" cy="1501" r="5.2" fill="none" stroke="#e6e6e6" stroke-width="1.2"/><path d="M2440 1513.6L2445.4 1505L2450.8 1513.6z" fill="none" stroke="#e6e6e6" stroke-width="1.2"/>
<rect x="2484.6" y="1493.6" width="22.8" height="16" fill="none" stroke="#e6e6e6" stroke-width="1.3"/><path d="M2502 1495.6h3.6v3.6zM2486.6 1504.2v3.6h3.6z" fill="#e6e6e6"/><path d="M2499.4 1501.4L2504.6 1496.4M2492.6 1502.4L2487.6 1507" stroke="#e6e6e6" stroke-width="1.2"/>
<rect x="2519.6" y="1491.6" width="24.4" height="3" fill="#e6e6e6"/>
<rect x="2519.6" y="1500.6" width="24.4" height="3" fill="#e6e6e6"/>
<rect x="2519.6" y="1509.6" width="24.4" height="3" fill="#e6e6e6"/></svg>
<span class="t" style="left:1689.2px;top:1494px;font-size:18px;color:#f4f4f4;font-weight:700;transform:scaleX(0.9578);">MODEL</span>
<span class="t" style="left:2277.9px;top:1494px;font-size:18px;color:#f4f4f4;font-weight:700;transform:scaleX(0.6637);">1:1</span>
</footer>
<div id="winborder" style="left:0;top:0;width:2556px;height:1528px;box-sizing:border-box;border:1px solid #08a0e8;pointer-events:none"></div>
</body></html>
